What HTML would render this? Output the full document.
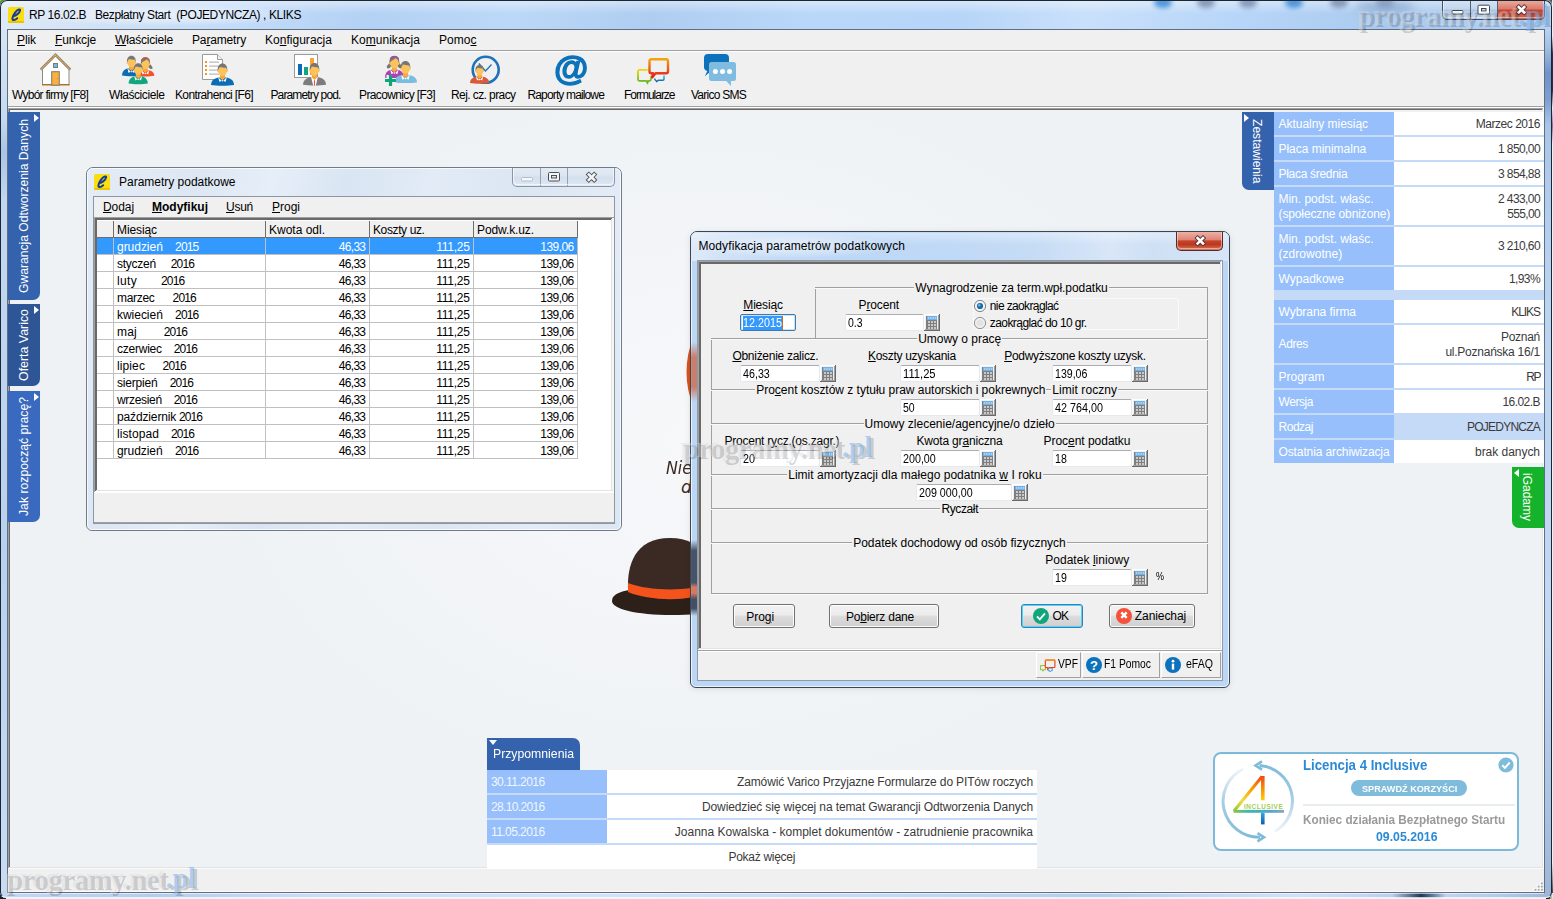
<!DOCTYPE html>
<html lang="pl"><head><meta charset="utf-8"><title>RP 16.02.B Bezpłatny Start</title>
<style>
html,body{margin:0;padding:0;}
body{width:1553px;height:899px;overflow:hidden;position:relative;background:#1b2a22;font-family:"Liberation Sans",sans-serif;font-size:12px;}
div,span.t,svg{position:absolute;}
span.t{white-space:pre;}
u{text-decoration:underline;text-underline-offset:1px;}
</style></head>
<body>
<div style="left:0px;top:0px;width:12px;height:12px;background:linear-gradient(135deg,#dfe8dc 0%,#4f9a2b 9%,#3a7d22 30%,#2f6a1c 60%,#1f3a2a 100%);"></div>
<div style="left:1541px;top:0px;width:12px;height:12px;background:linear-gradient(225deg,#10151c 0%,#e9f0fa 35%,#e9f0fa 100%);"></div>
<div style="left:1552px;top:0px;width:1px;height:899px;background:linear-gradient(to bottom,#e9f0fa 0%,#e9f0fa 4%,#232e52 6%,#232e52 10%,#e9f0fa 12%,#8f6aa8 14%,#e9f0fa 16%,#e9f0fa 96%,#1a2230 100%);"></div>
<div style="left:0px;top:898px;width:1553px;height:1px;background:#eef3fa;"></div>
<div style="left:0px;top:893px;width:6px;height:6px;background:#1a2028;"></div>
<div style="left:1546px;top:893px;width:7px;height:6px;background:linear-gradient(to right,#1a2028 0%,#1a2028 45%,#c98a2a 60%,#8fd0f4 80%,#f4f4f4 100%);"></div>
<div style="left:0px;top:0px;width:1552px;height:898px;box-sizing:border-box;background:#b9d5f4;border-radius:7px 7px 6px 6px;overflow:hidden;"><div style="left:0;top:0;width:1552px;height:30px;background:linear-gradient(100deg,#dfeaf7 0%,#cfe0f5 8%,#c2dbf8 16%,#b3d1f4 24%,#bcd8f8 33%,#aecdf0 42%,#b9d7f9 52%,#b7d5f8 62%,#c9e0fa 70%,#b6d5f8 80%,#a9c9ee 90%,#b4d2f4 100%);"></div><div style="left:0;top:0;width:1552px;height:14px;background:linear-gradient(to bottom,rgba(255,255,255,.45),rgba(255,255,255,0));"></div><div style="left:1154px;top:-3px;width:18px;height:11px;background:#3f8fd9;border-radius:50%;filter:blur(2.500px);opacity:.9;"></div><div style="left:1197px;top:-3px;width:18px;height:11px;background:#7f93b5;border-radius:50%;filter:blur(2.500px);opacity:.9;"></div><div style="left:1239px;top:-3px;width:18px;height:11px;background:#7f93b5;border-radius:50%;filter:blur(2.500px);opacity:.9;"></div><div style="left:1285px;top:-3px;width:18px;height:11px;background:#3f8fd9;border-radius:50%;filter:blur(2.500px);opacity:.9;"></div><div style="left:1330px;top:-3px;width:18px;height:11px;background:#8094b4;border-radius:50%;filter:blur(2.500px);opacity:.9;"></div><div style="left:1376px;top:-3px;width:18px;height:11px;background:#8ea0bd;border-radius:50%;filter:blur(2.500px);opacity:.9;"></div><div style="left:1355px;top:2px;width:60px;height:10px;background:#7d9cc6;border-radius:50%;filter:blur(4px);opacity:.7;"></div><div style="left:0;top:30px;width:8px;height:868px;background:linear-gradient(to bottom,#d5e4f5 0%,#c5daf3 10%,#a9c4e8 14%,#c2d8f2 20%,#b7d1f0 60%,#c8dcf4 100%);"></div><div style="left:1544px;top:30px;width:8px;height:868px;background:linear-gradient(to bottom,#b4d2f4 0%,#a3bfe4 2%,#6f93c9 5%,#7d9fd0 8%,#a9c6ea 11%,#b9d4f2 30%,#c2d9f4 70%,#9db7d8 100%);"></div><div style="left:0;top:891px;width:1552px;height:7px;background:linear-gradient(to right,#c2d8f2 0,#b5cdec 150px,#c9def6 320px,#d0e3f9 600px,#c2d9f4 900px,#b4cdec 1100px,#cfe2f8 1300px,#b9d0ee 1392px,#6a7f9f 1408px,#1f3655 1421px,#6a82a6 1434px,#bdd3ef 1446px,#b3cbea 1500px,#9db5d6 1552px);"></div><div style="left:0;top:0;width:1552px;height:898px;box-sizing:border-box;border:1px solid rgba(255,255,255,.6);border-radius:6px;"></div></div>
<div style="left:0px;top:0px;width:1552px;height:898px;box-sizing:border-box;border:1px solid #1c2530;border-bottom-color:rgba(255,255,255,.35);border-radius:7px 7px 6px 6px;"></div>
<div style="left:7px;top:29px;width:1538px;height:864px;box-sizing:border-box;border:1px solid #5f6e80;background:#f0f0f0;"></div>
<div style="left:8px;top:893px;width:1536px;height:1px;background:rgba(255,255,255,.6);"></div>
<svg style="left:8px;top:7px" width="16" height="16" viewBox="0 0 16 16"><rect x="0" y="0" width="16" height="16" rx="1.5" fill="#fbdd10"/><rect x="0" y="14" width="16" height="2" rx="1" fill="#e9c400"/><path d="M5 9.200C8 8.700 11.600 6.200 12.100 3.400C12.400 1.900 10.400 2.100 8.600 3.900C6.400 6.100 4.600 9.700 4.400 11.700C4.200 13.500 6.600 13.600 9.200 11.200" fill="none" stroke="#173e94" stroke-width="2" stroke-linecap="round"/></svg>
<div style="left:20px;top:4px;width:290px;height:22px;background:radial-gradient(ellipse 50% 50% at 50% 50%,rgba(255,255,255,.55) 0%,rgba(255,255,255,.35) 55%,rgba(255,255,255,0) 100%);"></div>
<span class="t" style="top:8px;font-size:12px;line-height:14px;color:#000;left:29px;letter-spacing:-0.398px;">RP 16.02.B   Bezpłatny Start  (POJEDYNCZA) , KLIKS</span>
<div style="left:1442px;top:1px;width:103px;height:19px;box-sizing:border-box;border:1px solid #45515f;border-top:none;border-radius:0 0 5px 5px;background:linear-gradient(to bottom,#d4e3f5 0%,#c2d6ee 45%,#aac4e4 50%,#bdd4ee 100%);overflow:hidden;"><div style="left:54px;top:0;width:48px;height:18px;background:linear-gradient(to bottom,#e9a99b 0%,#d9796a 45%,#c5422e 50%,#d46a55 100%);"></div><div style="left:27px;top:0;width:1px;height:19px;background:#55606e;"></div><div style="left:54px;top:0;width:1px;height:19px;background:#55606e;"></div><div style="left:0;top:0;width:101px;height:17px;box-sizing:border-box;border:1px solid rgba(255,255,255,.5);border-top:none;border-radius:0 0 4px 4px;"></div></div>
<svg style="left:1442px;top:0" width="103" height="20" viewBox="0 0 103 20"><rect x="10" y="10.500" width="11" height="3.500" rx="1" fill="#fff" stroke="#3e4855" stroke-width="1"/><rect x="36" y="5.200" width="11.500" height="9" rx="1" fill="#fff" stroke="#3e4855" stroke-width="1"/><rect x="39.500" y="8.500" width="4.500" height="2.500" fill="#c6d8ee" stroke="#3e4855" stroke-width="1"/><path d="M76.8 7.1l5.4 5.4M82.2 7.1l-5.4 5.4" fill="none" stroke="#5a2f33" stroke-width="4.400" stroke-linecap="square"/><path d="M76.8 7.1l5.4 5.4M82.2 7.1l-5.4 5.4" fill="none" stroke="#fff" stroke-width="2.600" stroke-linecap="square"/></svg>
<div style="left:8px;top:30px;width:1536px;height:20px;background:#f0f0f0;"></div>
<span class="t" style="top:33px;font-size:12px;line-height:14px;color:#000;left:17px;letter-spacing:-0.090px;"><u>P</u>lik</span>
<span class="t" style="top:33px;font-size:12px;line-height:14px;color:#000;left:55px;letter-spacing:-0.147px;"><u>F</u>unkcje</span>
<span class="t" style="top:33px;font-size:12px;line-height:14px;color:#000;left:115px;letter-spacing:-0.183px;"><u>W</u>łaściciele</span>
<span class="t" style="top:33px;font-size:12px;line-height:14px;color:#000;left:192px;letter-spacing:-0.153px;">Pa<u>r</u>ametry</span>
<span class="t" style="top:33px;font-size:12px;line-height:14px;color:#000;left:265px;letter-spacing:0.022px;">Ko<u>n</u>figuracja</span>
<span class="t" style="top:33px;font-size:12px;line-height:14px;color:#000;left:351px;letter-spacing:0.026px;">Ko<u>m</u>unikacja</span>
<span class="t" style="top:33px;font-size:12px;line-height:14px;color:#000;left:439px;letter-spacing:0.028px;">Pomo<u>c</u></span>
<div style="left:8px;top:50px;width:1536px;height:1px;background:#a0a0a0;"></div>
<div style="left:8px;top:51px;width:1536px;height:1px;background:#fff;"></div>
<div style="left:8px;top:52px;width:1536px;height:55px;background:#f0f0f0;"></div>
<div style="left:8px;top:106px;width:1536px;height:1px;background:#a0a0a0;"></div>
<div style="left:8px;top:107px;width:1536px;height:1px;background:#fff;"></div>
<span class="t" style="top:88px;font-size:12px;line-height:14px;color:#000;left:12px;letter-spacing:-0.744px;">Wybór firmy [F8]</span>
<span class="t" style="top:88px;font-size:12px;line-height:14px;color:#000;left:109px;letter-spacing:-0.411px;">Właściciele</span>
<span class="t" style="top:88px;font-size:12px;line-height:14px;color:#000;left:175px;letter-spacing:-0.629px;">Kontrahenci [F6]</span>
<span class="t" style="top:88px;font-size:12px;line-height:14px;color:#000;left:270.4px;letter-spacing:-0.846px;">Parametry pod.</span>
<span class="t" style="top:88px;font-size:12px;line-height:14px;color:#000;left:359px;letter-spacing:-0.624px;">Pracownicy [F3]</span>
<span class="t" style="top:88px;font-size:12px;line-height:14px;color:#000;left:451px;letter-spacing:-0.585px;">Rej. cz. pracy</span>
<span class="t" style="top:88px;font-size:12px;line-height:14px;color:#000;left:527.5px;letter-spacing:-0.858px;">Raporty mailowe</span>
<span class="t" style="top:88px;font-size:12px;line-height:14px;color:#000;left:624px;letter-spacing:-1.019px;">Formularze</span>
<span class="t" style="top:88px;font-size:12px;line-height:14px;color:#000;left:691px;letter-spacing:-0.747px;">Varico SMS</span>
<div style="left:8px;top:108px;width:1536px;height:784px;background:#f0f0f0;"></div>
<div style="left:8px;top:108px;width:1535px;height:1px;background:#a0a0a0;"></div>
<div style="left:8px;top:109px;width:1534px;height:1px;background:#696969;"></div>
<div style="left:8px;top:108px;width:1px;height:760px;background:#a0a0a0;"></div>
<div style="left:9px;top:109px;width:1px;height:759px;background:#696969;"></div>
<div style="left:10px;top:110px;width:1532px;height:757px;background:radial-gradient(ellipse 520px 380px at 690px 330px,#f7f8fa 0%,#f3f5f8 45%,#eef2f5 100%);"></div>
<div style="left:1542px;top:109px;width:1px;height:759px;background:#e3e3e3;"></div>
<div style="left:1543px;top:108px;width:1px;height:760px;background:#fff;"></div>
<div style="left:9px;top:867px;width:1534px;height:1px;background:#e3e3e3;"></div>
<div style="left:8px;top:868px;width:1536px;height:1px;background:#fafafa;"></div>
<div style="left:8px;top:869px;width:1536px;height:23px;background:#f0f0f0;"></div>
<div style="left:8px;top:891px;width:1536px;height:1px;background:#fbfbfb;"></div>
<svg style="left:1532px;top:880px" width="12" height="12" viewBox="0 0 12 12"><rect x="8" y="1.5" width="1.500" height="1.500" fill="#fff"/><rect x="9" y="2.5" width="1.700" height="1.700" fill="#a3a3a3"/><rect x="4.8" y="4.7" width="1.500" height="1.500" fill="#fff"/><rect x="5.8" y="5.7" width="1.700" height="1.700" fill="#a3a3a3"/><rect x="8" y="4.7" width="1.500" height="1.500" fill="#fff"/><rect x="9" y="5.7" width="1.700" height="1.700" fill="#a3a3a3"/><rect x="1.6" y="7.9" width="1.500" height="1.500" fill="#fff"/><rect x="2.6" y="8.9" width="1.700" height="1.700" fill="#a3a3a3"/><rect x="4.8" y="7.9" width="1.500" height="1.500" fill="#fff"/><rect x="5.8" y="8.9" width="1.700" height="1.700" fill="#a3a3a3"/><rect x="8" y="7.9" width="1.500" height="1.500" fill="#fff"/><rect x="9" y="8.9" width="1.700" height="1.700" fill="#a3a3a3"/></svg>
<div style="left:8px;top:112px;width:32px;height:188px;background:#3462ac;border-radius:0 0 7px 0;"></div>
<svg style="left:34px;top:114px" width="5" height="8" viewBox="0 0 5 8"><path d="M0 0L5 4L0 8z" fill="#fff"/></svg>
<span class="t" style="left:16.4px;top:293px;font-size:13px;line-height:15px;color:#fff;transform:rotate(-90deg) scaleX(0.9334);transform-origin:0 0;">Gwarancja Odtworzenia Danych</span>
<div style="left:8px;top:304px;width:32px;height:82px;background:#2e5596;border-radius:0 0 7px 0;"></div>
<svg style="left:34px;top:306px" width="5" height="8" viewBox="0 0 5 8"><path d="M0 0L5 4L0 8z" fill="#fff"/></svg>
<span class="t" style="left:16.4px;top:381px;font-size:13px;line-height:15px;color:#fff;transform:rotate(-90deg) scaleX(0.9521);transform-origin:0 0;">Oferta Varico</span>
<div style="left:8px;top:391px;width:32px;height:131px;background:#3a6abf;border-radius:0 0 7px 0;"></div>
<svg style="left:34px;top:393px" width="5" height="8" viewBox="0 0 5 8"><path d="M0 0L5 4L0 8z" fill="#fff"/></svg>
<span class="t" style="left:16.4px;top:516px;font-size:13px;line-height:15px;color:#fff;transform:rotate(-90deg) scaleX(0.9411);transform-origin:0 0;">Jak rozpocząć pracę?</span>
<div style="left:1242px;top:112px;width:32px;height:78px;background:#3462ac;border-radius:0 0 0 7px;"></div>
<svg style="left:1244px;top:114px" width="5" height="8" viewBox="0 0 5 8"><path d="M0 0L5 4L0 8z" fill="#fff"/></svg>
<span class="t" style="left:1264.7px;top:118.5px;font-size:13px;line-height:15px;color:#fff;transform:rotate(90deg) scaleX(0.9297);transform-origin:0 0;">Zestawienia</span>
<div style="left:1274px;top:112px;width:270px;height:351px;background:#c5daf7;"></div>
<div style="left:1274px;top:112px;width:120px;height:23px;background:#96bffb;"></div>
<div style="left:1394px;top:112px;width:150px;height:23px;background:#fff;"></div>
<span class="t" style="top:117px;font-size:12px;line-height:14px;color:#fff;left:1278.5px;letter-spacing:-0.034px;">Aktualny miesiąc</span>
<span class="t" style="top:117px;font-size:12px;line-height:14px;color:#3a3a3a;right:13px;letter-spacing:-0.461px;">Marzec 2016</span>
<div style="left:1274px;top:137px;width:120px;height:23px;background:#96bffb;"></div>
<div style="left:1394px;top:137px;width:150px;height:23px;background:#fff;"></div>
<span class="t" style="top:142px;font-size:12px;line-height:14px;color:#fff;left:1278.5px;letter-spacing:-0.023px;">Płaca minimalna</span>
<span class="t" style="top:142px;font-size:12px;line-height:14px;color:#3a3a3a;right:13px;letter-spacing:-0.590px;">1 850,00</span>
<div style="left:1274px;top:162px;width:120px;height:23px;background:#96bffb;"></div>
<div style="left:1394px;top:162px;width:150px;height:23px;background:#fff;"></div>
<span class="t" style="top:167px;font-size:12px;line-height:14px;color:#fff;left:1278.5px;letter-spacing:-0.301px;">Płaca średnia</span>
<span class="t" style="top:167px;font-size:12px;line-height:14px;color:#3a3a3a;right:13px;letter-spacing:-0.590px;">3 854,88</span>
<div style="left:1274px;top:187px;width:120px;height:38px;background:#96bffb;"></div>
<div style="left:1394px;top:187px;width:150px;height:38px;background:#fff;"></div>
<span class="t" style="top:192px;font-size:12px;line-height:14px;color:#fff;left:1278.5px;letter-spacing:-0.021px;">Min. podst. właśc.</span>
<span class="t" style="top:207px;font-size:12px;line-height:14px;color:#fff;left:1278.5px;letter-spacing:-0.119px;">(społeczne obniżone)</span>
<span class="t" style="top:192px;font-size:12px;line-height:14px;color:#3a3a3a;right:13px;letter-spacing:-0.590px;">2 433,00</span>
<span class="t" style="top:207px;font-size:12px;line-height:14px;color:#3a3a3a;right:13px;letter-spacing:-0.667px;">555,00</span>
<div style="left:1274px;top:227px;width:120px;height:38px;background:#96bffb;"></div>
<div style="left:1394px;top:227px;width:150px;height:38px;background:#fff;"></div>
<span class="t" style="top:232px;font-size:12px;line-height:14px;color:#fff;left:1278.5px;letter-spacing:-0.021px;">Min. podst. właśc.</span>
<span class="t" style="top:247px;font-size:12px;line-height:14px;color:#fff;left:1278.5px;letter-spacing:0.031px;">(zdrowotne)</span>
<span class="t" style="top:239px;font-size:12px;line-height:14px;color:#3a3a3a;right:13px;letter-spacing:-0.590px;">3 210,60</span>
<div style="left:1274px;top:267px;width:120px;height:23px;background:#96bffb;"></div>
<div style="left:1394px;top:267px;width:150px;height:23px;background:#fff;"></div>
<span class="t" style="top:272px;font-size:12px;line-height:14px;color:#fff;left:1278.5px;letter-spacing:0.026px;">Wypadkowe</span>
<span class="t" style="top:272px;font-size:12px;line-height:14px;color:#3a3a3a;right:13px;letter-spacing:-0.606px;">1,93%</span>
<div style="left:1274px;top:300px;width:120px;height:23px;background:#96bffb;"></div>
<div style="left:1394px;top:300px;width:150px;height:23px;background:#fff;"></div>
<span class="t" style="top:305px;font-size:12px;line-height:14px;color:#fff;left:1278.5px;letter-spacing:-0.032px;">Wybrana firma</span>
<span class="t" style="top:305px;font-size:12px;line-height:14px;color:#3a3a3a;right:13px;letter-spacing:-1.066px;">KLIKS</span>
<div style="left:1274px;top:325px;width:120px;height:38px;background:#96bffb;"></div>
<div style="left:1394px;top:325px;width:150px;height:38px;background:#fff;"></div>
<span class="t" style="top:337px;font-size:12px;line-height:14px;color:#fff;left:1278.5px;letter-spacing:-0.372px;">Adres</span>
<span class="t" style="top:330px;font-size:12px;line-height:14px;color:#3a3a3a;right:13px;letter-spacing:-0.284px;">Poznań</span>
<span class="t" style="top:345px;font-size:12px;line-height:14px;color:#3a3a3a;right:13px;letter-spacing:-0.244px;">ul.Poznańska 16/1</span>
<div style="left:1274px;top:365px;width:120px;height:23px;background:#96bffb;"></div>
<div style="left:1394px;top:365px;width:150px;height:23px;background:#fff;"></div>
<span class="t" style="top:370px;font-size:12px;line-height:14px;color:#fff;left:1278.5px;">Program</span>
<span class="t" style="top:370px;font-size:12px;line-height:14px;color:#3a3a3a;right:13px;letter-spacing:-1.500px;">RP</span>
<div style="left:1274px;top:390px;width:120px;height:23px;background:#96bffb;"></div>
<div style="left:1394px;top:390px;width:150px;height:23px;background:#fff;"></div>
<span class="t" style="top:395px;font-size:12px;line-height:14px;color:#fff;left:1278.5px;letter-spacing:-0.438px;">Wersja</span>
<span class="t" style="top:395px;font-size:12px;line-height:14px;color:#3a3a3a;right:13px;letter-spacing:-0.539px;">16.02.B</span>
<div style="left:1274px;top:415px;width:120px;height:23px;background:#96bffb;"></div>
<div style="left:1394px;top:415px;width:150px;height:23px;background:#c5daf7;"></div>
<span class="t" style="top:420px;font-size:12px;line-height:14px;color:#fff;left:1278.5px;letter-spacing:-0.477px;">Rodzaj</span>
<span class="t" style="top:420px;font-size:12px;line-height:14px;color:#3a3a3a;right:13px;letter-spacing:-0.769px;">POJEDYNCZA</span>
<div style="left:1274px;top:440px;width:120px;height:23px;background:#96bffb;"></div>
<div style="left:1394px;top:440px;width:150px;height:23px;background:#fff;"></div>
<span class="t" style="top:445px;font-size:12px;line-height:14px;color:#fff;left:1278.5px;letter-spacing:-0.114px;">Ostatnia archiwizacja</span>
<span class="t" style="top:445px;font-size:12px;line-height:14px;color:#3a3a3a;right:13px;letter-spacing:-0.034px;">brak danych</span>
<div style="left:1512px;top:467px;width:32px;height:61px;background:#14b32b;border-radius:0 0 0 7px;"></div>
<svg style="left:1514px;top:469px" width="5" height="8" viewBox="0 0 5 8"><path d="M5 0L0 4L5 8z" fill="#fff"/></svg>
<span class="t" style="left:1534.5px;top:473px;font-size:13px;line-height:15px;color:#fff;transform:rotate(90deg) scaleX(0.9225);transform-origin:0 0;">iGadamy</span>
<div style="left:487px;top:738px;width:93px;height:32px;background:#3462ac;border-radius:0 7px 0 0;"></div>
<svg style="left:489px;top:740px" width="8" height="5" viewBox="0 0 8 5"><path d="M0 0L8 0L4 5z" fill="#fff"/></svg>
<span class="t" style="top:746px;font-size:13px;line-height:15px;color:#fff;left:493px;transform:scaleX(0.9419);transform-origin:0 0;">Przypomnienia</span>
<div style="left:487px;top:770px;width:550px;height:75px;background:#c5daf7;"></div>
<div style="left:487px;top:770px;width:120px;height:23px;background:#96bffb;"></div>
<div style="left:607px;top:770px;width:430px;height:23px;background:#fff;"></div>
<span class="t" style="top:775px;font-size:12px;line-height:14px;color:#f2f6fd;left:491px;letter-spacing:-0.567px;">30.11.2016</span>
<span class="t" style="top:775px;font-size:12px;line-height:14px;color:#3a3a3a;right:520px;letter-spacing:-0.139px;">Zamówić Varico Przyjazne Formularze do PITów roczych</span>
<div style="left:487px;top:795px;width:120px;height:23px;background:#96bffb;"></div>
<div style="left:607px;top:795px;width:430px;height:23px;background:#fff;"></div>
<span class="t" style="top:800px;font-size:12px;line-height:14px;color:#f2f6fd;left:491px;letter-spacing:-0.656px;">28.10.2016</span>
<span class="t" style="top:800px;font-size:12px;line-height:14px;color:#3a3a3a;right:520px;letter-spacing:-0.121px;">Dowiedzieć się więcej na temat Gwarancji Odtworzenia Danych</span>
<div style="left:487px;top:820px;width:120px;height:23px;background:#96bffb;"></div>
<div style="left:607px;top:820px;width:430px;height:23px;background:#fff;"></div>
<span class="t" style="top:825px;font-size:12px;line-height:14px;color:#f2f6fd;left:491px;letter-spacing:-0.567px;">11.05.2016</span>
<span class="t" style="top:825px;font-size:12px;line-height:14px;color:#3a3a3a;right:520px;">Joanna Kowalska - komplet dokumentów - zatrudnienie pracownika</span>
<div style="left:487px;top:845px;width:550px;height:24px;background:#fff;"></div>
<span class="t" style="top:850px;font-size:12px;line-height:14px;color:#3a3a3a;left:728.5px;letter-spacing:-0.294px;">Pokaż więcej</span>
<svg style="left:606px;top:530px" width="140" height="92" viewBox="606 530 140 92"><path d="M612 601 C612 594 622 589.500 640 589.500 L704 589.500 C722 589.500 732 594 732 601 C732 609 708 615 672 615 C636 615 612 609 612 601z" fill="#2d2019"/><path d="M628 590 C627 566 634 538 670 538 C706 538 713 566 712 590 C690 600 650 600 628 590z" fill="#3b2a24"/><path d="M628 583 C650 591.500 690 591.500 712 583 L712 592 C690 601.500 650 601.500 628 592z" fill="#f4541c"/></svg>
<svg style="left:684px;top:330px" width="40" height="84" viewBox="684 330 40 84"><circle cx="777.500" cy="372" r="91" fill="#d9531e"/></svg>
<span class="t" style="top:458px;font-size:17px;line-height:20px;color:#3a2a25;font-family:'DejaVu Sans','Liberation Sans',sans-serif;font-style:italic;left:665.5px;transform:scaleX(0.9317);transform-origin:0 0;">Nie</span>
<span class="t" style="top:476.5px;font-size:17px;line-height:20px;color:#3a2a25;font-family:'DejaVu Sans','Liberation Sans',sans-serif;font-style:italic;left:681px;">d</span>
<div style="left:86px;top:167px;width:536px;height:364px;box-sizing:border-box;border:1px solid #6f7b8a;border-radius:7px 7px 6px 6px;background:linear-gradient(105deg,#e4ecf6 0%,#dde7f3 18%,#e6eef8 30%,#d9e5f3 42%,#e2ebf6 55%,#dbe6f3 70%,#e3ecf6 85%,#dce7f4 100%);box-shadow:0 0 0 1px rgba(255,255,255,.0);"></div>
<div style="left:87px;top:168px;width:534px;height:362px;box-sizing:border-box;border:1px solid rgba(255,255,255,.75);border-radius:6px 6px 5px 5px;"></div>
<svg style="left:94px;top:174px" width="16" height="16" viewBox="0 0 16 16"><rect x="0" y="0" width="16" height="16" rx="1.5" fill="#fbdd10"/><rect x="0" y="14" width="16" height="2" rx="1" fill="#e9c400"/><path d="M5 9.200C8 8.700 11.600 6.200 12.100 3.400C12.400 1.900 10.400 2.100 8.600 3.900C6.400 6.100 4.600 9.700 4.400 11.700C4.200 13.500 6.600 13.600 9.200 11.200" fill="none" stroke="#173e94" stroke-width="2" stroke-linecap="round"/></svg>
<span class="t" style="top:175px;font-size:12px;line-height:14px;color:#000;left:119px;letter-spacing:-0.012px;">Parametry podatkowe</span>
<div style="left:512px;top:168px;width:103px;height:19px;box-sizing:border-box;border:1px solid #8a96a6;border-top:none;border-radius:0 0 5px 5px;background:linear-gradient(to bottom,#e3ebf5 0%,#dbe5f1 45%,#d3dfee 50%,#dfe8f3 100%);overflow:hidden;"><div style="left:27px;top:0;width:1px;height:18px;background:#97a2b0;"></div><div style="left:54px;top:0;width:1px;height:18px;background:#97a2b0;"></div><div style="left:0;top:0;width:101px;height:17px;box-sizing:border-box;border:1px solid rgba(255,255,255,.6);border-top:none;border-radius:0 0 4px 4px;"></div></div>
<svg style="left:512px;top:168px" width="103" height="20" viewBox="0 0 103 20"><rect x="9.500" y="9.500" width="11" height="3.500" rx="1" fill="#f4f7fb" stroke="#b4bdc9" stroke-width="1"/><rect x="36.500" y="4.500" width="11" height="8.500" rx="1" fill="#f4f4f4" stroke="#4a4f57" stroke-width="1"/><rect x="39.500" y="7.500" width="5" height="2.500" fill="#e0e6ee" stroke="#4a4f57" stroke-width="1"/><path d="M76.8 6.5l5.4 5.4M82.2 6.5l-5.4 5.4" fill="none" stroke="#4a4f57" stroke-width="4.400" stroke-linecap="square"/><path d="M76.8 6.5l5.4 5.4M82.2 6.5l-5.4 5.4" fill="none" stroke="#f4f4f4" stroke-width="2.600" stroke-linecap="square"/></svg>
<div style="left:93px;top:196px;width:522px;height:328px;box-sizing:border-box;border:1px solid #8d97a4;background:#f0f0f0;"></div>
<span class="t" style="top:200px;font-size:12px;line-height:14px;color:#000;left:103px;letter-spacing:-0.072px;"><u>D</u>odaj</span>
<span class="t" style="top:200px;font-size:12px;line-height:14px;color:#000;font-weight:bold;left:152px;"><u>M</u>odyfikuj</span>
<span class="t" style="top:200px;font-size:12px;line-height:14px;color:#000;left:226px;letter-spacing:-0.258px;"><u>U</u>suń</span>
<span class="t" style="top:200px;font-size:12px;line-height:14px;color:#000;left:272px;letter-spacing:-0.006px;"><u>P</u>rogi</span>
<div style="left:94px;top:217px;width:520px;height:276px;background:#fff;"></div>
<div style="left:94px;top:217px;width:520px;height:1px;background:#a0a0a0;"></div>
<div style="left:94px;top:218px;width:519px;height:2px;background:#696969;"></div>
<div style="left:94px;top:217px;width:1px;height:275px;background:#a0a0a0;"></div>
<div style="left:95px;top:218px;width:2px;height:274px;background:#696969;"></div>
<div style="left:611px;top:219px;width:1px;height:272px;background:#e3e3e3;"></div>
<div style="left:612px;top:218px;width:2px;height:274px;background:#f6f6f6;"></div>
<div style="left:96px;top:490px;width:517px;height:1px;background:#e3e3e3;"></div>
<div style="left:95px;top:491px;width:519px;height:2px;background:#fff;"></div>
<div style="left:97px;top:220px;width:481px;height:18px;background:#f0f0f0;"></div>
<div style="left:97px;top:237px;width:481px;height:1px;background:#6d6d6d;"></div>
<div style="left:113px;top:220px;width:1px;height:18px;background:#6d6d6d;"></div>
<div style="left:265px;top:220px;width:1px;height:18px;background:#6d6d6d;"></div>
<div style="left:369px;top:220px;width:1px;height:18px;background:#6d6d6d;"></div>
<div style="left:473px;top:220px;width:1px;height:18px;background:#6d6d6d;"></div>
<div style="left:577px;top:220px;width:1px;height:18px;background:#6d6d6d;"></div>
<div style="left:97px;top:220px;width:481px;height:1px;background:#fff;"></div>
<span class="t" style="top:223px;font-size:12px;line-height:14px;color:#000;left:117px;letter-spacing:-0.098px;">Miesiąc</span>
<span class="t" style="top:223px;font-size:12px;line-height:14px;color:#000;left:269px;letter-spacing:-0.005px;">Kwota odl.</span>
<span class="t" style="top:223px;font-size:12px;line-height:14px;color:#000;left:373px;letter-spacing:-0.386px;">Koszty uz.</span>
<span class="t" style="top:223px;font-size:12px;line-height:14px;color:#000;left:477px;letter-spacing:-0.103px;">Podw.k.uz.</span>
<div style="left:97px;top:238px;width:481px;height:16px;background:#3399ff;"></div>
<div style="left:97px;top:254px;width:481px;height:1px;background:#c0c0c0;"></div>
<span class="t" style="top:240px;font-size:12px;line-height:14px;color:#fff;left:117px;letter-spacing:-0.029px;">grudzień</span>
<span class="t" style="top:240px;font-size:12px;line-height:14px;color:#fff;left:175.1px;letter-spacing:-0.851px;">2015</span>
<span class="t" style="top:240px;font-size:12px;line-height:14px;color:#fff;right:1187.7px;letter-spacing:-0.706px;">46,33</span>
<span class="t" style="top:240px;font-size:12px;line-height:14px;color:#fff;right:1083.4px;letter-spacing:-0.270px;">111,25</span>
<span class="t" style="top:240px;font-size:12px;line-height:14px;color:#fff;right:979.3px;letter-spacing:-0.551px;">139,06</span>
<div style="left:97px;top:271px;width:481px;height:1px;background:#c0c0c0;"></div>
<span class="t" style="top:257px;font-size:12px;line-height:14px;color:#000;left:117px;letter-spacing:-0.270px;">styczeń</span>
<span class="t" style="top:257px;font-size:12px;line-height:14px;color:#000;left:170.8px;letter-spacing:-0.851px;">2016</span>
<span class="t" style="top:257px;font-size:12px;line-height:14px;color:#000;right:1187.7px;letter-spacing:-0.706px;">46,33</span>
<span class="t" style="top:257px;font-size:12px;line-height:14px;color:#000;right:1083.4px;letter-spacing:-0.270px;">111,25</span>
<span class="t" style="top:257px;font-size:12px;line-height:14px;color:#000;right:979.3px;letter-spacing:-0.551px;">139,06</span>
<div style="left:97px;top:288px;width:481px;height:1px;background:#c0c0c0;"></div>
<span class="t" style="top:274px;font-size:12px;line-height:14px;color:#000;left:117px;letter-spacing:0.328px;">luty</span>
<span class="t" style="top:274px;font-size:12px;line-height:14px;color:#000;left:161px;letter-spacing:-0.851px;">2016</span>
<span class="t" style="top:274px;font-size:12px;line-height:14px;color:#000;right:1187.7px;letter-spacing:-0.706px;">46,33</span>
<span class="t" style="top:274px;font-size:12px;line-height:14px;color:#000;right:1083.4px;letter-spacing:-0.270px;">111,25</span>
<span class="t" style="top:274px;font-size:12px;line-height:14px;color:#000;right:979.3px;letter-spacing:-0.551px;">139,06</span>
<div style="left:97px;top:305px;width:481px;height:1px;background:#c0c0c0;"></div>
<span class="t" style="top:291px;font-size:12px;line-height:14px;color:#000;left:117px;letter-spacing:-0.307px;">marzec</span>
<span class="t" style="top:291px;font-size:12px;line-height:14px;color:#000;left:172.6px;letter-spacing:-0.851px;">2016</span>
<span class="t" style="top:291px;font-size:12px;line-height:14px;color:#000;right:1187.7px;letter-spacing:-0.706px;">46,33</span>
<span class="t" style="top:291px;font-size:12px;line-height:14px;color:#000;right:1083.4px;letter-spacing:-0.270px;">111,25</span>
<span class="t" style="top:291px;font-size:12px;line-height:14px;color:#000;right:979.3px;letter-spacing:-0.551px;">139,06</span>
<div style="left:97px;top:322px;width:481px;height:1px;background:#c0c0c0;"></div>
<span class="t" style="top:308px;font-size:12px;line-height:14px;color:#000;left:117px;letter-spacing:-0.029px;">kwiecień</span>
<span class="t" style="top:308px;font-size:12px;line-height:14px;color:#000;left:175.1px;letter-spacing:-0.851px;">2016</span>
<span class="t" style="top:308px;font-size:12px;line-height:14px;color:#000;right:1187.7px;letter-spacing:-0.706px;">46,33</span>
<span class="t" style="top:308px;font-size:12px;line-height:14px;color:#000;right:1083.4px;letter-spacing:-0.270px;">111,25</span>
<span class="t" style="top:308px;font-size:12px;line-height:14px;color:#000;right:979.3px;letter-spacing:-0.551px;">139,06</span>
<div style="left:97px;top:339px;width:481px;height:1px;background:#c0c0c0;"></div>
<span class="t" style="top:325px;font-size:12px;line-height:14px;color:#000;left:117px;letter-spacing:0.219px;">maj</span>
<span class="t" style="top:325px;font-size:12px;line-height:14px;color:#000;left:163.8px;letter-spacing:-0.851px;">2016</span>
<span class="t" style="top:325px;font-size:12px;line-height:14px;color:#000;right:1187.7px;letter-spacing:-0.706px;">46,33</span>
<span class="t" style="top:325px;font-size:12px;line-height:14px;color:#000;right:1083.4px;letter-spacing:-0.270px;">111,25</span>
<span class="t" style="top:325px;font-size:12px;line-height:14px;color:#000;right:979.3px;letter-spacing:-0.551px;">139,06</span>
<div style="left:97px;top:356px;width:481px;height:1px;background:#c0c0c0;"></div>
<span class="t" style="top:342px;font-size:12px;line-height:14px;color:#000;left:117px;letter-spacing:-0.236px;">czerwiec</span>
<span class="t" style="top:342px;font-size:12px;line-height:14px;color:#000;left:173.8px;letter-spacing:-0.851px;">2016</span>
<span class="t" style="top:342px;font-size:12px;line-height:14px;color:#000;right:1187.7px;letter-spacing:-0.706px;">46,33</span>
<span class="t" style="top:342px;font-size:12px;line-height:14px;color:#000;right:1083.4px;letter-spacing:-0.270px;">111,25</span>
<span class="t" style="top:342px;font-size:12px;line-height:14px;color:#000;right:979.3px;letter-spacing:-0.551px;">139,06</span>
<div style="left:97px;top:373px;width:481px;height:1px;background:#c0c0c0;"></div>
<span class="t" style="top:359px;font-size:12px;line-height:14px;color:#000;left:117px;letter-spacing:0.107px;">lipiec</span>
<span class="t" style="top:359px;font-size:12px;line-height:14px;color:#000;left:162.6px;letter-spacing:-0.851px;">2016</span>
<span class="t" style="top:359px;font-size:12px;line-height:14px;color:#000;right:1187.7px;letter-spacing:-0.706px;">46,33</span>
<span class="t" style="top:359px;font-size:12px;line-height:14px;color:#000;right:1083.4px;letter-spacing:-0.270px;">111,25</span>
<span class="t" style="top:359px;font-size:12px;line-height:14px;color:#000;right:979.3px;letter-spacing:-0.551px;">139,06</span>
<div style="left:97px;top:390px;width:481px;height:1px;background:#c0c0c0;"></div>
<span class="t" style="top:376px;font-size:12px;line-height:14px;color:#000;left:117px;letter-spacing:-0.191px;">sierpień</span>
<span class="t" style="top:376px;font-size:12px;line-height:14px;color:#000;left:169.8px;letter-spacing:-0.851px;">2016</span>
<span class="t" style="top:376px;font-size:12px;line-height:14px;color:#000;right:1187.7px;letter-spacing:-0.706px;">46,33</span>
<span class="t" style="top:376px;font-size:12px;line-height:14px;color:#000;right:1083.4px;letter-spacing:-0.270px;">111,25</span>
<span class="t" style="top:376px;font-size:12px;line-height:14px;color:#000;right:979.3px;letter-spacing:-0.551px;">139,06</span>
<div style="left:97px;top:407px;width:481px;height:1px;background:#c0c0c0;"></div>
<span class="t" style="top:393px;font-size:12px;line-height:14px;color:#000;left:117px;letter-spacing:-0.320px;">wrzesień</span>
<span class="t" style="top:393px;font-size:12px;line-height:14px;color:#000;left:173.8px;letter-spacing:-0.851px;">2016</span>
<span class="t" style="top:393px;font-size:12px;line-height:14px;color:#000;right:1187.7px;letter-spacing:-0.706px;">46,33</span>
<span class="t" style="top:393px;font-size:12px;line-height:14px;color:#000;right:1083.4px;letter-spacing:-0.270px;">111,25</span>
<span class="t" style="top:393px;font-size:12px;line-height:14px;color:#000;right:979.3px;letter-spacing:-0.551px;">139,06</span>
<div style="left:97px;top:424px;width:481px;height:1px;background:#c0c0c0;"></div>
<span class="t" style="top:410px;font-size:12px;line-height:14px;color:#000;left:117px;letter-spacing:-0.137px;">październik</span>
<span class="t" style="top:410px;font-size:12px;line-height:14px;color:#000;left:178.9px;letter-spacing:-0.851px;">2016</span>
<span class="t" style="top:410px;font-size:12px;line-height:14px;color:#000;right:1187.7px;letter-spacing:-0.706px;">46,33</span>
<span class="t" style="top:410px;font-size:12px;line-height:14px;color:#000;right:1083.4px;letter-spacing:-0.270px;">111,25</span>
<span class="t" style="top:410px;font-size:12px;line-height:14px;color:#000;right:979.3px;letter-spacing:-0.551px;">139,06</span>
<div style="left:97px;top:441px;width:481px;height:1px;background:#c0c0c0;"></div>
<span class="t" style="top:427px;font-size:12px;line-height:14px;color:#000;left:117px;letter-spacing:0.066px;">listopad</span>
<span class="t" style="top:427px;font-size:12px;line-height:14px;color:#000;left:170.9px;letter-spacing:-0.851px;">2016</span>
<span class="t" style="top:427px;font-size:12px;line-height:14px;color:#000;right:1187.7px;letter-spacing:-0.706px;">46,33</span>
<span class="t" style="top:427px;font-size:12px;line-height:14px;color:#000;right:1083.4px;letter-spacing:-0.270px;">111,25</span>
<span class="t" style="top:427px;font-size:12px;line-height:14px;color:#000;right:979.3px;letter-spacing:-0.551px;">139,06</span>
<div style="left:97px;top:458px;width:481px;height:1px;background:#c0c0c0;"></div>
<span class="t" style="top:444px;font-size:12px;line-height:14px;color:#000;left:117px;letter-spacing:-0.066px;">grudzień</span>
<span class="t" style="top:444px;font-size:12px;line-height:14px;color:#000;left:175px;letter-spacing:-0.851px;">2016</span>
<span class="t" style="top:444px;font-size:12px;line-height:14px;color:#000;right:1187.7px;letter-spacing:-0.706px;">46,33</span>
<span class="t" style="top:444px;font-size:12px;line-height:14px;color:#000;right:1083.4px;letter-spacing:-0.270px;">111,25</span>
<span class="t" style="top:444px;font-size:12px;line-height:14px;color:#000;right:979.3px;letter-spacing:-0.551px;">139,06</span>
<div style="left:113px;top:238px;width:1px;height:221px;background:#c0c0c0;"></div>
<div style="left:265px;top:238px;width:1px;height:221px;background:#c0c0c0;"></div>
<div style="left:369px;top:238px;width:1px;height:221px;background:#c0c0c0;"></div>
<div style="left:473px;top:238px;width:1px;height:221px;background:#c0c0c0;"></div>
<div style="left:577px;top:238px;width:1px;height:221px;background:#c0c0c0;"></div>
<div style="left:94px;top:493px;width:520px;height:30px;background:#f0f0f0;"></div>
<div style="left:94px;top:522px;width:520px;height:1px;background:#a0a0a0;"></div>
<div style="left:690px;top:231px;width:540px;height:457px;box-sizing:border-box;border:1px solid #3c4653;border-radius:7px 7px 6px 6px;background:#bcd7f6;box-shadow:0 1px 6px rgba(0,0,0,.10);"></div>
<div style="left:691px;top:232px;width:538px;height:455px;box-sizing:border-box;border:1px solid rgba(255,255,255,.7);border-radius:6px 6px 5px 5px;"></div>
<div style="left:691px;top:232px;width:538px;height:29px;border-radius:6px 6px 0 0;background:linear-gradient(to right,#dfeaf8 0%,#d0e2f7 6%,#c4dbf6 16%,#bdd7f5 30%,#c0d9f6 50%,#c6dcf5 64%,#d8e6f8 78%,#cfe0f5 86%,#d6e5f7 100%);"></div>
<div style="left:692px;top:233px;width:536px;height:12px;background:linear-gradient(to bottom,rgba(255,255,255,.35),rgba(255,255,255,0));border-radius:5px 5px 0 0;"></div>
<div style="left:691px;top:342px;width:6px;height:60px;background:linear-gradient(to bottom,rgba(205,90,50,0),rgba(205,90,50,.7) 25%,rgba(205,90,50,.7) 75%,rgba(205,90,50,0));"></div>
<div style="left:691px;top:540px;width:6px;height:76px;background:linear-gradient(to bottom,rgba(50,60,80,0),rgba(50,60,80,.85) 14%,rgba(50,60,80,.85) 56%,rgba(225,95,60,.8) 62%,rgba(225,95,60,.8) 70%,rgba(45,55,75,.85) 78%,rgba(45,55,75,.85) 90%,rgba(45,55,75,0));"></div>
<div style="left:689px;top:234px;width:210px;height:24px;background:radial-gradient(ellipse 50% 50% at 50% 50%,rgba(255,255,255,.5) 0%,rgba(255,255,255,.3) 55%,rgba(255,255,255,0) 100%);"></div>
<span class="t" style="top:239px;font-size:12px;line-height:14px;color:#000;left:698.5px;letter-spacing:0.090px;">Modyfikacja parametrów podatkowych</span>
<div style="left:1176px;top:232px;width:47px;height:19px;box-sizing:border-box;border:1px solid #5a2a25;border-top:none;border-radius:0 0 5px 5px;background:linear-gradient(to bottom,#eeb1a6 0%,#df8676 42%,#c7422c 50%,#b9391f 70%,#d77b62 100%);overflow:hidden;"><div style="left:0;top:0;width:45px;height:17px;box-sizing:border-box;border:1px solid rgba(255,255,255,.45);border-top:none;border-radius:0 0 4px 4px;"></div></div>
<svg style="left:1176px;top:232px" width="47" height="20" viewBox="0 0 47 20"><path d="M21.6 6.1l5.4 5.4M27 6.1l-5.4 5.4" fill="none" stroke="#5a2f33" stroke-width="4.400" stroke-linecap="square"/><path d="M21.6 6.1l5.4 5.4M27 6.1l-5.4 5.4" fill="none" stroke="#fff" stroke-width="2.600" stroke-linecap="square"/></svg>
<div style="left:697px;top:260px;width:526px;height:421px;background:#f0f0f0;"></div>
<div style="left:697px;top:260px;width:526px;height:1px;background:#8f9aa8;"></div>
<div style="left:697px;top:260px;width:1px;height:421px;background:#8f9aa8;"></div>
<div style="left:1222px;top:260px;width:1px;height:421px;background:#8f9aa8;"></div>
<div style="left:697px;top:680px;width:526px;height:1px;background:#8f9aa8;"></div>
<div style="left:698px;top:261px;width:523px;height:1px;background:#a0a0a0;"></div>
<div style="left:698px;top:262px;width:522px;height:2px;background:#696969;"></div>
<div style="left:698px;top:261px;width:1px;height:388px;background:#a0a0a0;"></div>
<div style="left:699px;top:262px;width:2px;height:387px;background:#696969;"></div>
<div style="left:1220px;top:263px;width:1px;height:386px;background:#e3e3e3;"></div>
<div style="left:1221px;top:262px;width:1px;height:388px;background:#fff;"></div>
<div style="left:699px;top:648px;width:522px;height:1px;background:#e3e3e3;"></div>
<div style="left:698px;top:649px;width:524px;height:1px;background:#fff;"></div>
<div style="left:698px;top:650px;width:524px;height:1px;background:#a0a0a0;"></div>
<div style="left:698px;top:651px;width:524px;height:1px;background:#fff;"></div>
<div style="left:815px;top:287px;width:1px;height:51px;background:#a0a0a0;"></div>
<div style="left:815px;top:287px;width:393px;height:1px;background:#a0a0a0;"></div>
<div style="left:815px;top:288px;width:393px;height:1px;background:#fafafa;"></div>
<div style="left:711px;top:338px;width:1px;height:256px;background:#a0a0a0;"></div>
<div style="left:1207px;top:287px;width:1px;height:307px;background:#a0a0a0;"></div>
<div style="left:711px;top:338px;width:497px;height:1px;background:#a0a0a0;"></div>
<div style="left:711px;top:339px;width:497px;height:1px;background:#fafafa;"></div>
<div style="left:711px;top:389px;width:497px;height:1px;background:#a0a0a0;"></div>
<div style="left:711px;top:390px;width:497px;height:1px;background:#fafafa;"></div>
<div style="left:711px;top:423px;width:497px;height:1px;background:#a0a0a0;"></div>
<div style="left:711px;top:424px;width:497px;height:1px;background:#fafafa;"></div>
<div style="left:711px;top:474px;width:497px;height:1px;background:#a0a0a0;"></div>
<div style="left:711px;top:475px;width:497px;height:1px;background:#fafafa;"></div>
<div style="left:711px;top:508px;width:497px;height:1px;background:#a0a0a0;"></div>
<div style="left:711px;top:509px;width:497px;height:1px;background:#fafafa;"></div>
<div style="left:711px;top:542px;width:497px;height:1px;background:#a0a0a0;"></div>
<div style="left:711px;top:543px;width:497px;height:1px;background:#fafafa;"></div>
<div style="left:711px;top:593px;width:497px;height:1px;background:#a0a0a0;"></div>
<div style="left:711px;top:594px;width:497px;height:1px;background:#fafafa;"></div>
<div style="left:914.3px;top:281px;width:194.4px;height:15px;background:#f0f0f0;"></div>
<span class="t" style="top:281px;font-size:12px;line-height:14px;color:#000;left:915.3px;letter-spacing:-0.048px;">Wynagrodzenie za term.wpł.podatku</span>
<div style="left:917.2px;top:332px;width:85px;height:15px;background:#f0f0f0;"></div>
<span class="t" style="top:332px;font-size:12px;line-height:14px;color:#000;left:918.2px;letter-spacing:-0.029px;">Umowy o pracę</span>
<div style="left:755.2px;top:383px;width:291.3px;height:15px;background:#f0f0f0;"></div>
<span class="t" style="top:383px;font-size:12px;line-height:14px;color:#000;left:756.2px;letter-spacing:-0.016px;">Pro<u>c</u>ent kosztów z tytułu praw autorskich i pokrewnych</span>
<div style="left:1051.2px;top:383px;width:67px;height:15px;background:#f0f0f0;"></div>
<span class="t" style="top:383px;font-size:12px;line-height:14px;color:#000;left:1052.2px;letter-spacing:0.082px;">Limit roczny</span>
<div style="left:863.5px;top:417px;width:192px;height:15px;background:#f0f0f0;"></div>
<span class="t" style="top:417px;font-size:12px;line-height:14px;color:#000;left:864.5px;">Umowy zlecenie/agencyjne/o dzieło</span>
<div style="left:787.2px;top:468px;width:255.4px;height:15px;background:#f0f0f0;"></div>
<span class="t" style="top:468px;font-size:12px;line-height:14px;color:#000;left:788.2px;letter-spacing:0.027px;">Limit amortyzacji dla małego podatnika <u>w</u> I roku</span>
<div style="left:940.4px;top:502px;width:38.7px;height:15px;background:#f0f0f0;"></div>
<span class="t" style="top:502px;font-size:12px;line-height:14px;color:#000;left:941.4px;letter-spacing:-0.378px;">Ryczałt</span>
<div style="left:852.2px;top:536px;width:214.5px;height:15px;background:#f0f0f0;"></div>
<span class="t" style="top:536px;font-size:12px;line-height:14px;color:#000;left:853.2px;letter-spacing:-0.008px;">Podatek dochodowy od osób fizycznych</span>
<span class="t" style="top:298px;font-size:12px;line-height:14px;color:#000;left:743.3px;letter-spacing:-0.170px;"><u>M</u>iesiąc</span>
<div style="left:740px;top:314px;width:56px;height:17px;box-sizing:border-box;border:1px solid #3d7bad;border-radius:2px;background:#fff;box-shadow:inset 0 0 0 1px #c9e2f5;"></div>
<div style="left:742.5px;top:316px;width:39px;height:14px;background:#3399ff;"></div>
<span class="t" style="top:316px;font-size:12px;line-height:14px;color:#fff;left:743px;transform:scaleX(0.8988);transform-origin:0 0;">12.2015</span>
<div style="left:781.5px;top:316px;width:1px;height:14px;background:#c86a1c;"></div>
<span class="t" style="top:298px;font-size:12px;line-height:14px;color:#000;left:858.5px;letter-spacing:-0.125px;">P<u>r</u>ocent</span>
<div style="left:845px;top:314px;width:79px;height:17px;box-sizing:border-box;border:1px solid #e3e9ef;border-top-color:#abadb3;border-radius:2px;background:#fff;"></div>
<span class="t" style="top:316px;font-size:12px;line-height:14px;color:#000;left:848px;transform:scaleX(0.8749);transform-origin:0 0;">0.3</span>
<svg style="left:924px;top:314px" width="16" height="17" viewBox="0 0 16 17"><rect x="0" y="0" width="16" height="17" fill="#f0f0f0"/><rect x="0" y="0" width="15" height="1" fill="#fff"/><rect x="0" y="0" width="1" height="16" fill="#fff"/><rect x="15" y="0" width="1" height="17" fill="#696969"/><rect x="0" y="16" width="16" height="1" fill="#696969"/><rect x="14" y="1" width="1" height="15" fill="#a0a0a0"/><rect x="1" y="15" width="14" height="1" fill="#a0a0a0"/><rect x="2" y="2" width="11" height="13" fill="#7f7f7f"/><rect x="3" y="2" width="10" height="4" fill="#6fb1e8"/><rect x="4" y="3.5" width="1.4" height="1" fill="#e8f3fc"/><rect x="6.3" y="3.5" width="1.4" height="1" fill="#e8f3fc"/><rect x="8.6" y="3.5" width="1.4" height="1" fill="#e8f3fc"/><rect x="10.9" y="3.5" width="1.4" height="1" fill="#e8f3fc"/><rect x="4" y="7" width="2" height="2" fill="#c9c9c9"/><rect x="7" y="7" width="2" height="2" fill="#c9c9c9"/><rect x="10" y="7" width="2" height="2" fill="#c9c9c9"/><rect x="4" y="10" width="2" height="2" fill="#c9c9c9"/><rect x="7" y="10" width="2" height="2" fill="#c9c9c9"/><rect x="10" y="10" width="2" height="2" fill="#c9c9c9"/><rect x="4" y="13" width="2" height="2" fill="#c9c9c9"/><rect x="7" y="13" width="2" height="2" fill="#c9c9c9"/><rect x="10" y="13" width="2" height="2" fill="#c9c9c9"/></svg>
<div style="left:973px;top:298px;width:206px;height:32px;box-sizing:border-box;border:1px solid #fafafa;border-radius:3px;"></div>
<svg style="left:973px;top:299px" width="14" height="32" viewBox="0 0 14 32"><circle cx="7" cy="7" r="5.6" fill="#f4f4f4" stroke="#7e8489" stroke-width="1"/><circle cx="7" cy="7" r="3.1" fill="#1c6aa6"/><circle cx="6.2" cy="6.2" r="1.3" fill="#5fb4e8"/><circle cx="7" cy="24" r="5.6" fill="#f1f1f1" stroke="#8e9398" stroke-width="1"/><circle cx="7" cy="24" r="3.6" fill="#e3e3e3"/></svg>
<span class="t" style="top:299px;font-size:12px;line-height:14px;color:#000;left:989.8px;letter-spacing:-0.628px;">nie zaokrąglać</span>
<span class="t" style="top:316px;font-size:12px;line-height:14px;color:#000;left:989.8px;letter-spacing:-0.569px;">zaokrąglać do 10 gr.</span>
<span class="t" style="top:349px;font-size:12px;line-height:14px;color:#000;left:732.4px;letter-spacing:-0.278px;"><u>O</u>bniżenie zalicz.</span>
<div style="left:740px;top:365px;width:80px;height:17px;box-sizing:border-box;border:1px solid #e3e9ef;border-top-color:#abadb3;border-radius:2px;background:#fff;"></div>
<span class="t" style="top:367px;font-size:12px;line-height:14px;color:#000;left:743px;transform:scaleX(0.8924);transform-origin:0 0;">46,33</span>
<svg style="left:820px;top:365px" width="16" height="17" viewBox="0 0 16 17"><rect x="0" y="0" width="16" height="17" fill="#f0f0f0"/><rect x="0" y="0" width="15" height="1" fill="#fff"/><rect x="0" y="0" width="1" height="16" fill="#fff"/><rect x="15" y="0" width="1" height="17" fill="#696969"/><rect x="0" y="16" width="16" height="1" fill="#696969"/><rect x="14" y="1" width="1" height="15" fill="#a0a0a0"/><rect x="1" y="15" width="14" height="1" fill="#a0a0a0"/><rect x="2" y="2" width="11" height="13" fill="#7f7f7f"/><rect x="3" y="2" width="10" height="4" fill="#6fb1e8"/><rect x="4" y="3.5" width="1.4" height="1" fill="#e8f3fc"/><rect x="6.3" y="3.5" width="1.4" height="1" fill="#e8f3fc"/><rect x="8.6" y="3.5" width="1.4" height="1" fill="#e8f3fc"/><rect x="10.9" y="3.5" width="1.4" height="1" fill="#e8f3fc"/><rect x="4" y="7" width="2" height="2" fill="#c9c9c9"/><rect x="7" y="7" width="2" height="2" fill="#c9c9c9"/><rect x="10" y="7" width="2" height="2" fill="#c9c9c9"/><rect x="4" y="10" width="2" height="2" fill="#c9c9c9"/><rect x="7" y="10" width="2" height="2" fill="#c9c9c9"/><rect x="10" y="10" width="2" height="2" fill="#c9c9c9"/><rect x="4" y="13" width="2" height="2" fill="#c9c9c9"/><rect x="7" y="13" width="2" height="2" fill="#c9c9c9"/><rect x="10" y="13" width="2" height="2" fill="#c9c9c9"/></svg>
<span class="t" style="top:349px;font-size:12px;line-height:14px;color:#000;left:868px;letter-spacing:-0.307px;"><u>K</u>oszty uzyskania</span>
<div style="left:900px;top:365px;width:80px;height:17px;box-sizing:border-box;border:1px solid #e3e9ef;border-top-color:#abadb3;border-radius:2px;background:#fff;"></div>
<span class="t" style="top:367px;font-size:12px;line-height:14px;color:#000;left:903px;transform:scaleX(0.9335);transform-origin:0 0;">111,25</span>
<svg style="left:980px;top:365px" width="16" height="17" viewBox="0 0 16 17"><rect x="0" y="0" width="16" height="17" fill="#f0f0f0"/><rect x="0" y="0" width="15" height="1" fill="#fff"/><rect x="0" y="0" width="1" height="16" fill="#fff"/><rect x="15" y="0" width="1" height="17" fill="#696969"/><rect x="0" y="16" width="16" height="1" fill="#696969"/><rect x="14" y="1" width="1" height="15" fill="#a0a0a0"/><rect x="1" y="15" width="14" height="1" fill="#a0a0a0"/><rect x="2" y="2" width="11" height="13" fill="#7f7f7f"/><rect x="3" y="2" width="10" height="4" fill="#6fb1e8"/><rect x="4" y="3.5" width="1.4" height="1" fill="#e8f3fc"/><rect x="6.3" y="3.5" width="1.4" height="1" fill="#e8f3fc"/><rect x="8.6" y="3.5" width="1.4" height="1" fill="#e8f3fc"/><rect x="10.9" y="3.5" width="1.4" height="1" fill="#e8f3fc"/><rect x="4" y="7" width="2" height="2" fill="#c9c9c9"/><rect x="7" y="7" width="2" height="2" fill="#c9c9c9"/><rect x="10" y="7" width="2" height="2" fill="#c9c9c9"/><rect x="4" y="10" width="2" height="2" fill="#c9c9c9"/><rect x="7" y="10" width="2" height="2" fill="#c9c9c9"/><rect x="10" y="10" width="2" height="2" fill="#c9c9c9"/><rect x="4" y="13" width="2" height="2" fill="#c9c9c9"/><rect x="7" y="13" width="2" height="2" fill="#c9c9c9"/><rect x="10" y="13" width="2" height="2" fill="#c9c9c9"/></svg>
<span class="t" style="top:349px;font-size:12px;line-height:14px;color:#000;left:1004.2px;letter-spacing:-0.289px;"><u>P</u>odwyższone koszty uzysk.</span>
<div style="left:1052px;top:365px;width:80px;height:17px;box-sizing:border-box;border:1px solid #e3e9ef;border-top-color:#abadb3;border-radius:2px;background:#fff;"></div>
<span class="t" style="top:367px;font-size:12px;line-height:14px;color:#000;left:1055px;transform:scaleX(0.8828);transform-origin:0 0;">139,06</span>
<svg style="left:1132px;top:365px" width="16" height="17" viewBox="0 0 16 17"><rect x="0" y="0" width="16" height="17" fill="#f0f0f0"/><rect x="0" y="0" width="15" height="1" fill="#fff"/><rect x="0" y="0" width="1" height="16" fill="#fff"/><rect x="15" y="0" width="1" height="17" fill="#696969"/><rect x="0" y="16" width="16" height="1" fill="#696969"/><rect x="14" y="1" width="1" height="15" fill="#a0a0a0"/><rect x="1" y="15" width="14" height="1" fill="#a0a0a0"/><rect x="2" y="2" width="11" height="13" fill="#7f7f7f"/><rect x="3" y="2" width="10" height="4" fill="#6fb1e8"/><rect x="4" y="3.5" width="1.4" height="1" fill="#e8f3fc"/><rect x="6.3" y="3.5" width="1.4" height="1" fill="#e8f3fc"/><rect x="8.6" y="3.5" width="1.4" height="1" fill="#e8f3fc"/><rect x="10.9" y="3.5" width="1.4" height="1" fill="#e8f3fc"/><rect x="4" y="7" width="2" height="2" fill="#c9c9c9"/><rect x="7" y="7" width="2" height="2" fill="#c9c9c9"/><rect x="10" y="7" width="2" height="2" fill="#c9c9c9"/><rect x="4" y="10" width="2" height="2" fill="#c9c9c9"/><rect x="7" y="10" width="2" height="2" fill="#c9c9c9"/><rect x="10" y="10" width="2" height="2" fill="#c9c9c9"/><rect x="4" y="13" width="2" height="2" fill="#c9c9c9"/><rect x="7" y="13" width="2" height="2" fill="#c9c9c9"/><rect x="10" y="13" width="2" height="2" fill="#c9c9c9"/></svg>
<div style="left:900px;top:399px;width:80px;height:17px;box-sizing:border-box;border:1px solid #e3e9ef;border-top-color:#abadb3;border-radius:2px;background:#fff;"></div>
<span class="t" style="top:401px;font-size:12px;line-height:14px;color:#000;left:903px;transform:scaleX(0.8758);transform-origin:0 0;">50</span>
<svg style="left:980px;top:399px" width="16" height="17" viewBox="0 0 16 17"><rect x="0" y="0" width="16" height="17" fill="#f0f0f0"/><rect x="0" y="0" width="15" height="1" fill="#fff"/><rect x="0" y="0" width="1" height="16" fill="#fff"/><rect x="15" y="0" width="1" height="17" fill="#696969"/><rect x="0" y="16" width="16" height="1" fill="#696969"/><rect x="14" y="1" width="1" height="15" fill="#a0a0a0"/><rect x="1" y="15" width="14" height="1" fill="#a0a0a0"/><rect x="2" y="2" width="11" height="13" fill="#7f7f7f"/><rect x="3" y="2" width="10" height="4" fill="#6fb1e8"/><rect x="4" y="3.5" width="1.4" height="1" fill="#e8f3fc"/><rect x="6.3" y="3.5" width="1.4" height="1" fill="#e8f3fc"/><rect x="8.6" y="3.5" width="1.4" height="1" fill="#e8f3fc"/><rect x="10.9" y="3.5" width="1.4" height="1" fill="#e8f3fc"/><rect x="4" y="7" width="2" height="2" fill="#c9c9c9"/><rect x="7" y="7" width="2" height="2" fill="#c9c9c9"/><rect x="10" y="7" width="2" height="2" fill="#c9c9c9"/><rect x="4" y="10" width="2" height="2" fill="#c9c9c9"/><rect x="7" y="10" width="2" height="2" fill="#c9c9c9"/><rect x="10" y="10" width="2" height="2" fill="#c9c9c9"/><rect x="4" y="13" width="2" height="2" fill="#c9c9c9"/><rect x="7" y="13" width="2" height="2" fill="#c9c9c9"/><rect x="10" y="13" width="2" height="2" fill="#c9c9c9"/></svg>
<div style="left:1052px;top:399px;width:80px;height:17px;box-sizing:border-box;border:1px solid #e3e9ef;border-top-color:#abadb3;border-radius:2px;background:#fff;"></div>
<span class="t" style="top:401px;font-size:12px;line-height:14px;color:#000;left:1055px;transform:scaleX(0.8972);transform-origin:0 0;">42 764,00</span>
<svg style="left:1132px;top:399px" width="16" height="17" viewBox="0 0 16 17"><rect x="0" y="0" width="16" height="17" fill="#f0f0f0"/><rect x="0" y="0" width="15" height="1" fill="#fff"/><rect x="0" y="0" width="1" height="16" fill="#fff"/><rect x="15" y="0" width="1" height="17" fill="#696969"/><rect x="0" y="16" width="16" height="1" fill="#696969"/><rect x="14" y="1" width="1" height="15" fill="#a0a0a0"/><rect x="1" y="15" width="14" height="1" fill="#a0a0a0"/><rect x="2" y="2" width="11" height="13" fill="#7f7f7f"/><rect x="3" y="2" width="10" height="4" fill="#6fb1e8"/><rect x="4" y="3.5" width="1.4" height="1" fill="#e8f3fc"/><rect x="6.3" y="3.5" width="1.4" height="1" fill="#e8f3fc"/><rect x="8.6" y="3.5" width="1.4" height="1" fill="#e8f3fc"/><rect x="10.9" y="3.5" width="1.4" height="1" fill="#e8f3fc"/><rect x="4" y="7" width="2" height="2" fill="#c9c9c9"/><rect x="7" y="7" width="2" height="2" fill="#c9c9c9"/><rect x="10" y="7" width="2" height="2" fill="#c9c9c9"/><rect x="4" y="10" width="2" height="2" fill="#c9c9c9"/><rect x="7" y="10" width="2" height="2" fill="#c9c9c9"/><rect x="10" y="10" width="2" height="2" fill="#c9c9c9"/><rect x="4" y="13" width="2" height="2" fill="#c9c9c9"/><rect x="7" y="13" width="2" height="2" fill="#c9c9c9"/><rect x="10" y="13" width="2" height="2" fill="#c9c9c9"/></svg>
<span class="t" style="top:434px;font-size:12px;line-height:14px;color:#000;left:724.4px;letter-spacing:-0.219px;">Procent r<u>y</u>cz.(os.zagr.)</span>
<div style="left:740px;top:450px;width:80px;height:17px;box-sizing:border-box;border:1px solid #e3e9ef;border-top-color:#abadb3;border-radius:2px;background:#fff;"></div>
<span class="t" style="top:452px;font-size:12px;line-height:14px;color:#000;left:743px;transform:scaleX(0.8982);transform-origin:0 0;">20</span>
<svg style="left:820px;top:450px" width="16" height="17" viewBox="0 0 16 17"><rect x="0" y="0" width="16" height="17" fill="#f0f0f0"/><rect x="0" y="0" width="15" height="1" fill="#fff"/><rect x="0" y="0" width="1" height="16" fill="#fff"/><rect x="15" y="0" width="1" height="17" fill="#696969"/><rect x="0" y="16" width="16" height="1" fill="#696969"/><rect x="14" y="1" width="1" height="15" fill="#a0a0a0"/><rect x="1" y="15" width="14" height="1" fill="#a0a0a0"/><rect x="2" y="2" width="11" height="13" fill="#7f7f7f"/><rect x="3" y="2" width="10" height="4" fill="#6fb1e8"/><rect x="4" y="3.5" width="1.4" height="1" fill="#e8f3fc"/><rect x="6.3" y="3.5" width="1.4" height="1" fill="#e8f3fc"/><rect x="8.6" y="3.5" width="1.4" height="1" fill="#e8f3fc"/><rect x="10.9" y="3.5" width="1.4" height="1" fill="#e8f3fc"/><rect x="4" y="7" width="2" height="2" fill="#c9c9c9"/><rect x="7" y="7" width="2" height="2" fill="#c9c9c9"/><rect x="10" y="7" width="2" height="2" fill="#c9c9c9"/><rect x="4" y="10" width="2" height="2" fill="#c9c9c9"/><rect x="7" y="10" width="2" height="2" fill="#c9c9c9"/><rect x="10" y="10" width="2" height="2" fill="#c9c9c9"/><rect x="4" y="13" width="2" height="2" fill="#c9c9c9"/><rect x="7" y="13" width="2" height="2" fill="#c9c9c9"/><rect x="10" y="13" width="2" height="2" fill="#c9c9c9"/></svg>
<span class="t" style="top:434px;font-size:12px;line-height:14px;color:#000;left:916.5px;letter-spacing:-0.182px;">Kwota gr<u>a</u>niczna</span>
<div style="left:900px;top:450px;width:80px;height:17px;box-sizing:border-box;border:1px solid #e3e9ef;border-top-color:#abadb3;border-radius:2px;background:#fff;"></div>
<span class="t" style="top:452px;font-size:12px;line-height:14px;color:#000;left:903px;transform:scaleX(0.8937);transform-origin:0 0;">200,00</span>
<svg style="left:980px;top:450px" width="16" height="17" viewBox="0 0 16 17"><rect x="0" y="0" width="16" height="17" fill="#f0f0f0"/><rect x="0" y="0" width="15" height="1" fill="#fff"/><rect x="0" y="0" width="1" height="16" fill="#fff"/><rect x="15" y="0" width="1" height="17" fill="#696969"/><rect x="0" y="16" width="16" height="1" fill="#696969"/><rect x="14" y="1" width="1" height="15" fill="#a0a0a0"/><rect x="1" y="15" width="14" height="1" fill="#a0a0a0"/><rect x="2" y="2" width="11" height="13" fill="#7f7f7f"/><rect x="3" y="2" width="10" height="4" fill="#6fb1e8"/><rect x="4" y="3.5" width="1.4" height="1" fill="#e8f3fc"/><rect x="6.3" y="3.5" width="1.4" height="1" fill="#e8f3fc"/><rect x="8.6" y="3.5" width="1.4" height="1" fill="#e8f3fc"/><rect x="10.9" y="3.5" width="1.4" height="1" fill="#e8f3fc"/><rect x="4" y="7" width="2" height="2" fill="#c9c9c9"/><rect x="7" y="7" width="2" height="2" fill="#c9c9c9"/><rect x="10" y="7" width="2" height="2" fill="#c9c9c9"/><rect x="4" y="10" width="2" height="2" fill="#c9c9c9"/><rect x="7" y="10" width="2" height="2" fill="#c9c9c9"/><rect x="10" y="10" width="2" height="2" fill="#c9c9c9"/><rect x="4" y="13" width="2" height="2" fill="#c9c9c9"/><rect x="7" y="13" width="2" height="2" fill="#c9c9c9"/><rect x="10" y="13" width="2" height="2" fill="#c9c9c9"/></svg>
<span class="t" style="top:434px;font-size:12px;line-height:14px;color:#000;left:1043.5px;letter-spacing:-0.028px;">Proc<u>e</u>nt podatku</span>
<div style="left:1052px;top:450px;width:80px;height:17px;box-sizing:border-box;border:1px solid #e3e9ef;border-top-color:#abadb3;border-radius:2px;background:#fff;"></div>
<span class="t" style="top:452px;font-size:12px;line-height:14px;color:#000;left:1055px;transform:scaleX(0.8833);transform-origin:0 0;">18</span>
<svg style="left:1132px;top:450px" width="16" height="17" viewBox="0 0 16 17"><rect x="0" y="0" width="16" height="17" fill="#f0f0f0"/><rect x="0" y="0" width="15" height="1" fill="#fff"/><rect x="0" y="0" width="1" height="16" fill="#fff"/><rect x="15" y="0" width="1" height="17" fill="#696969"/><rect x="0" y="16" width="16" height="1" fill="#696969"/><rect x="14" y="1" width="1" height="15" fill="#a0a0a0"/><rect x="1" y="15" width="14" height="1" fill="#a0a0a0"/><rect x="2" y="2" width="11" height="13" fill="#7f7f7f"/><rect x="3" y="2" width="10" height="4" fill="#6fb1e8"/><rect x="4" y="3.5" width="1.4" height="1" fill="#e8f3fc"/><rect x="6.3" y="3.5" width="1.4" height="1" fill="#e8f3fc"/><rect x="8.6" y="3.5" width="1.4" height="1" fill="#e8f3fc"/><rect x="10.9" y="3.5" width="1.4" height="1" fill="#e8f3fc"/><rect x="4" y="7" width="2" height="2" fill="#c9c9c9"/><rect x="7" y="7" width="2" height="2" fill="#c9c9c9"/><rect x="10" y="7" width="2" height="2" fill="#c9c9c9"/><rect x="4" y="10" width="2" height="2" fill="#c9c9c9"/><rect x="7" y="10" width="2" height="2" fill="#c9c9c9"/><rect x="10" y="10" width="2" height="2" fill="#c9c9c9"/><rect x="4" y="13" width="2" height="2" fill="#c9c9c9"/><rect x="7" y="13" width="2" height="2" fill="#c9c9c9"/><rect x="10" y="13" width="2" height="2" fill="#c9c9c9"/></svg>
<div style="left:916px;top:484px;width:96px;height:17px;box-sizing:border-box;border:1px solid #e3e9ef;border-top-color:#abadb3;border-radius:2px;background:#fff;"></div>
<span class="t" style="top:486px;font-size:12px;line-height:14px;color:#000;left:919px;transform:scaleX(0.8924);transform-origin:0 0;">209 000,00</span>
<svg style="left:1012px;top:484px" width="16" height="17" viewBox="0 0 16 17"><rect x="0" y="0" width="16" height="17" fill="#f0f0f0"/><rect x="0" y="0" width="15" height="1" fill="#fff"/><rect x="0" y="0" width="1" height="16" fill="#fff"/><rect x="15" y="0" width="1" height="17" fill="#696969"/><rect x="0" y="16" width="16" height="1" fill="#696969"/><rect x="14" y="1" width="1" height="15" fill="#a0a0a0"/><rect x="1" y="15" width="14" height="1" fill="#a0a0a0"/><rect x="2" y="2" width="11" height="13" fill="#7f7f7f"/><rect x="3" y="2" width="10" height="4" fill="#6fb1e8"/><rect x="4" y="3.5" width="1.4" height="1" fill="#e8f3fc"/><rect x="6.3" y="3.5" width="1.4" height="1" fill="#e8f3fc"/><rect x="8.6" y="3.5" width="1.4" height="1" fill="#e8f3fc"/><rect x="10.9" y="3.5" width="1.4" height="1" fill="#e8f3fc"/><rect x="4" y="7" width="2" height="2" fill="#c9c9c9"/><rect x="7" y="7" width="2" height="2" fill="#c9c9c9"/><rect x="10" y="7" width="2" height="2" fill="#c9c9c9"/><rect x="4" y="10" width="2" height="2" fill="#c9c9c9"/><rect x="7" y="10" width="2" height="2" fill="#c9c9c9"/><rect x="10" y="10" width="2" height="2" fill="#c9c9c9"/><rect x="4" y="13" width="2" height="2" fill="#c9c9c9"/><rect x="7" y="13" width="2" height="2" fill="#c9c9c9"/><rect x="10" y="13" width="2" height="2" fill="#c9c9c9"/></svg>
<span class="t" style="top:553px;font-size:12px;line-height:14px;color:#000;left:1045.2px;letter-spacing:0.040px;">Podatek <u>l</u>iniowy</span>
<div style="left:1052px;top:569px;width:80px;height:17px;box-sizing:border-box;border:1px solid #e3e9ef;border-top-color:#abadb3;border-radius:2px;background:#fff;"></div>
<span class="t" style="top:571px;font-size:12px;line-height:14px;color:#000;left:1055px;transform:scaleX(0.8833);transform-origin:0 0;">19</span>
<svg style="left:1132px;top:569px" width="16" height="17" viewBox="0 0 16 17"><rect x="0" y="0" width="16" height="17" fill="#f0f0f0"/><rect x="0" y="0" width="15" height="1" fill="#fff"/><rect x="0" y="0" width="1" height="16" fill="#fff"/><rect x="15" y="0" width="1" height="17" fill="#696969"/><rect x="0" y="16" width="16" height="1" fill="#696969"/><rect x="14" y="1" width="1" height="15" fill="#a0a0a0"/><rect x="1" y="15" width="14" height="1" fill="#a0a0a0"/><rect x="2" y="2" width="11" height="13" fill="#7f7f7f"/><rect x="3" y="2" width="10" height="4" fill="#6fb1e8"/><rect x="4" y="3.5" width="1.4" height="1" fill="#e8f3fc"/><rect x="6.3" y="3.5" width="1.4" height="1" fill="#e8f3fc"/><rect x="8.6" y="3.5" width="1.4" height="1" fill="#e8f3fc"/><rect x="10.9" y="3.5" width="1.4" height="1" fill="#e8f3fc"/><rect x="4" y="7" width="2" height="2" fill="#c9c9c9"/><rect x="7" y="7" width="2" height="2" fill="#c9c9c9"/><rect x="10" y="7" width="2" height="2" fill="#c9c9c9"/><rect x="4" y="10" width="2" height="2" fill="#c9c9c9"/><rect x="7" y="10" width="2" height="2" fill="#c9c9c9"/><rect x="10" y="10" width="2" height="2" fill="#c9c9c9"/><rect x="4" y="13" width="2" height="2" fill="#c9c9c9"/><rect x="7" y="13" width="2" height="2" fill="#c9c9c9"/><rect x="10" y="13" width="2" height="2" fill="#c9c9c9"/></svg>
<span class="t" style="top:571px;font-size:10px;line-height:11px;color:#000;left:1156.2px;transform:scaleX(0.8982);transform-origin:0 0;">%</span>
<div style="left:733px;top:604px;width:62px;height:24px;box-sizing:border-box;border:1px solid #707070;border-radius:3px;box-shadow:inset 0 0 0 1px rgba(255,255,255,.9);background:linear-gradient(to bottom,#f2f2f2 0%,#ebebeb 46%,#dddddd 50%,#cfcfcf 100%);"></div>
<span class="t" style="top:610px;font-size:12px;line-height:14px;color:#000;left:746.3px;letter-spacing:-0.069px;">Pro<u>g</u>i</span>
<div style="left:829px;top:604px;width:110px;height:24px;box-sizing:border-box;border:1px solid #707070;border-radius:3px;box-shadow:inset 0 0 0 1px rgba(255,255,255,.9);background:linear-gradient(to bottom,#f2f2f2 0%,#ebebeb 46%,#dddddd 50%,#cfcfcf 100%);"></div>
<span class="t" style="top:610px;font-size:12px;line-height:14px;color:#000;left:846px;letter-spacing:-0.229px;">Po<u>b</u>ierz dane</span>
<div style="left:1021px;top:604px;width:62px;height:24px;box-sizing:border-box;border:1px solid #3c7fb1;border-radius:3px;box-shadow:inset 0 0 0 1px #48d6fb;background:linear-gradient(to bottom,#f2f2f2 0%,#ebebeb 46%,#dddddd 50%,#cfcfcf 100%);"></div>
<svg style="left:1033px;top:608px" width="16" height="16" viewBox="0 0 16 16"><circle cx="8" cy="8" r="8" fill="#10a67c"/><path d="M4 8.4l2.8 2.9l5.2-6" fill="none" stroke="#fff" stroke-width="1.8"/></svg>
<span class="t" style="top:609px;font-size:12px;line-height:14px;color:#000;left:1052.6px;letter-spacing:-0.922px;">OK</span>
<div style="left:1109px;top:604px;width:86px;height:24px;box-sizing:border-box;border:1px solid #707070;border-radius:3px;box-shadow:inset 0 0 0 1px rgba(255,255,255,.9);background:linear-gradient(to bottom,#f2f2f2 0%,#ebebeb 46%,#dddddd 50%,#cfcfcf 100%);"></div>
<svg style="left:1116px;top:608px" width="16" height="16" viewBox="0 0 16 16"><circle cx="8" cy="8" r="8" fill="#f4523a"/><path d="M5.3 4.4l5.4 5.4M10.7 4.4l-5.4 5.4" fill="none" stroke="#fff" stroke-width="2.4"/></svg>
<span class="t" style="top:609px;font-size:12px;line-height:14px;color:#000;left:1134.8px;letter-spacing:-0.081px;">Zaniechaj</span>
<div style="left:1036px;top:652px;width:45px;height:26px;box-sizing:border-box;border-left:1px solid #fff;border-top:1px solid #fff;border-right:1px solid #a0a0a0;border-bottom:1px solid #a0a0a0;"></div>
<div style="left:1082px;top:652px;width:78px;height:26px;box-sizing:border-box;border-left:1px solid #fff;border-top:1px solid #fff;border-right:1px solid #a0a0a0;border-bottom:1px solid #a0a0a0;"></div>
<div style="left:1161px;top:652px;width:60px;height:26px;box-sizing:border-box;border-left:1px solid #fff;border-top:1px solid #fff;border-right:1px solid #a0a0a0;border-bottom:1px solid #a0a0a0;"></div>
<svg style="left:1039px;top:658px;transform:scale(0.53);transform-origin:0 0" width="32" height="32" viewBox="0 0 32 32"><path d="M3 14h9v8h-3l-1.5 2.5l-1-2.5h-3.5z" fill="none" stroke="#8bc53f" stroke-width="2" stroke-linejoin="round"/><path d="M17 19h8v5h-2.5l-1.5 2l-.5-2h-3.500z" fill="none" stroke="#2d8fd6" stroke-width="1.6" stroke-linejoin="round"/><path d="M13 4h16a1 1 0 0 1 1 1v12a1 1 0 0 1-1 1h-10l-3 3.500v-3.500h-3a1 1 0 0 1-1-1v-12a1 1 0 0 1 1-1z" fill="#f0f0f0" stroke="#e8431f" stroke-width="2.2" stroke-linejoin="round"/><path d="M12 5.200v-.2a1 1 0 0 1 1-1h16a1 1 0 0 1 1 1v.2" fill="none" stroke="#f39a1d" stroke-width="2.2"/></svg>
<span class="t" style="top:657px;font-size:12px;line-height:14px;color:#000;left:1057.7px;transform:scaleX(0.8568);transform-origin:0 0;">VPF</span>
<svg style="left:1086px;top:657px" width="16" height="16" viewBox="0 0 16 16"><circle cx="8" cy="8" r="8" fill="#0b72bb"/></svg>
<span class="t" style="top:658px;font-size:13px;line-height:15px;color:#fff;font-weight:bold;left:1094px;transform:translateX(-50%);transform-origin:0 0;">?</span>
<span class="t" style="top:657px;font-size:12px;line-height:14px;color:#000;left:1104.4px;transform:scaleX(0.8594);transform-origin:0 0;">F1 Pomoc</span>
<svg style="left:1165px;top:657px" width="16" height="16" viewBox="0 0 16 16"><circle cx="8" cy="8" r="8" fill="#0b72bb"/><rect x="6.8" y="6.6" width="2.4" height="6" fill="#fff"/><circle cx="8" cy="4.2" r="1.4" fill="#fff"/></svg>
<span class="t" style="top:657px;font-size:12px;line-height:14px;color:#000;left:1185.5px;transform:scaleX(0.8798);transform-origin:0 0;">eFAQ</span>
<svg style="left:0;top:50px" width="780" height="40" viewBox="0 50 780 40"><rect x="42.5" y="69" width="26.5" height="16" fill="#fff"/><path d="M42.5 69.500L55.500 56.500L68.500 69.500z" fill="#fff"/><path d="M42.500 69.500v15.500M69 69.500v15.500" stroke="#8b8b8b" stroke-width="1" fill="none"/><rect x="42" y="84.500" width="27.500" height="1.500" fill="#fbb03b"/><rect x="42" y="84" width="27.500" height="1" fill="#7b7b7b"/><path d="M40.700 69.600L55.500 54.800L70.300 69.600" fill="none" stroke="#7b7b7b" stroke-width="2.600" stroke-linejoin="miter"/><path d="M40.900 69.400L55.500 54.800L70.100 69.400" fill="none" stroke="#fbb03b" stroke-width="1.300" stroke-dasharray="1.200 .500"/><rect x="51.700" y="71.700" width="7.600" height="13.500" fill="#fbb03b" stroke="#7b7b7b" stroke-width="1"/><rect x="57" y="78" width=".800" height=".800" fill="#7b7b7b"/><rect x="53.500" y="63.500" width="4" height="4" fill="#74b9e7" stroke="#7b7b7b" stroke-width="1"/><path d="M122.0 75.6 C122.0 70.4 126.2 68.6 128.5 68.6 L134.3 68.6 C136.6 68.6 140.8 70.4 140.8 75.6 C136.1 76.5 126.7 76.5 122.0 75.6z" fill="#0b6cb5"/><path d="M127.4 68.2 L131.4 72.6 L135.4 68.2 L134.2 72.9 L131.4 71.0 L128.6 72.9z" fill="#fff"/><path d="M129.3 65.7 L133.5 65.7 L134.0 68.8 L131.4 71.1 L128.8 68.8z" fill="#f8a93b"/><ellipse cx="131.4" cy="62.7" rx="5.0" ry="1.5" fill="#fcc25c"/><ellipse cx="131.4" cy="62.0" rx="4.0" ry="5.3" fill="#fcc25c"/><path d="M127.1 62.6 C125.7 53.4 137.1 53.4 135.7 62.6 L134.8 59.6 C132.9 59.8 130.8 59.1 129.0 58.9 L128.0 60.5z" fill="#767676"/><path d="M136.5 75.8 C136.5 71.6 140.5 70.2 142.5 70.2 L148.3 70.2 C150.3 70.2 154.3 71.6 154.3 75.8 C149.8 76.7 141.0 76.7 136.5 75.8z" fill="#f4512c"/><path d="M141.4 69.8 L145.4 74.2 L149.4 69.8 L148.2 74.5 L145.4 72.6 L142.6 74.5z" fill="#fff"/><path d="M143.3 67.3 L147.5 67.3 L148.0 70.4 L145.4 72.7 L142.8 70.4z" fill="#f8a93b"/><path d="M140.9 62.7 C140.4 55.5 150.4 55.5 149.9 62.7 C150.2 65.9 153.3 66.0 152.4 68.8 C150.9 69.5 149.1 68.6 148.7 67.3 L142.1 67.3 C141.7 68.6 139.9 69.5 138.4 68.8 C137.5 66.0 140.6 65.9 140.9 62.7z" fill="#767676"/><ellipse cx="145.4" cy="64.3" rx="5.0" ry="1.5" fill="#fcc25c"/><ellipse cx="145.4" cy="63.6" rx="4.0" ry="5.3" fill="#fcc25c"/><path d="M141.1 63.8 C140.2 55.7 150.6 55.7 149.7 63.8 C149.3 61.4 147.6 59.7 146.5 59.6 C145.0 61.2 142.3 61.4 141.1 63.8z" fill="#767676"/><path d="M141.4 60.3 C142.8 56.6 148.0 56.6 149.4 60.3" fill="none" stroke="#f4512c" stroke-width="1.0"/><path d="M128.6 83.6 C128.6 78.1 132.9 76.2 135.3 76.2 L141.1 76.2 C143.5 76.2 147.8 78.1 147.8 83.6 C143.0 84.5 133.4 84.5 128.6 83.6z" fill="#12a67c"/><path d="M134.2 75.8 L138.2 80.2 L142.2 75.8 L141.0 80.5 L138.2 78.6 L135.4 80.5z" fill="#fff"/><path d="M136.1 73.3 L140.3 73.3 L140.8 76.4 L138.2 78.7 L135.6 76.4z" fill="#f8a93b"/><ellipse cx="138.2" cy="70.3" rx="5.0" ry="1.5" fill="#fcc25c"/><ellipse cx="138.2" cy="69.6" rx="4.0" ry="5.3" fill="#fcc25c"/><path d="M133.9 70.2 C132.5 61.0 143.9 61.0 142.5 70.2 L141.6 67.2 C139.7 67.4 137.6 66.7 135.8 66.5 L134.8 68.1z" fill="#767676"/><path d="M202.500 54.500h15l5 5v20h-20z" fill="#fff" stroke="#9a9a9a" stroke-width="1"/><path d="M217.500 54.500v5h5" fill="#f4f4f4" stroke="#9a9a9a" stroke-width="1"/><rect x="205" y="61" width="2" height="2" fill="#f7941d"/><rect x="209" y="61.6" width="10" height="1" fill="#a9a9a9"/><rect x="205" y="65" width="2" height="2" fill="#f7941d"/><rect x="209" y="65.6" width="10" height="1" fill="#a9a9a9"/><rect x="205" y="69" width="2" height="2" fill="#f7941d"/><rect x="209" y="69.6" width="10" height="1" fill="#a9a9a9"/><rect x="205" y="73" width="2" height="2" fill="#f7941d"/><rect x="209" y="73.6" width="10" height="1" fill="#a9a9a9"/><path d="M211.0 85.1 C211.0 79.4 216.2 77.5 219.3 77.5 L225.7 77.5 C228.8 77.5 234.0 79.4 234.0 85.1 C228.2 86.0 216.8 86.0 211.0 85.1z" fill="#0b6cb5"/><path d="M218.1 77.1 L222.5 81.8 L226.9 77.1 L225.5 82.1 L222.5 80.1 L219.5 82.1z" fill="#fff"/><path d="M220.2 74.3 L224.8 74.3 L225.3 77.7 L222.5 80.2 L219.7 77.7z" fill="#f8a93b"/><ellipse cx="222.5" cy="71.1" rx="5.4" ry="1.6" fill="#fcc25c"/><ellipse cx="222.5" cy="70.3" rx="4.4" ry="5.8" fill="#fcc25c"/><path d="M217.8 70.9 C216.3 60.9 228.7 60.9 227.2 70.9 L226.2 67.7 C224.1 67.9 221.9 67.1 219.9 66.9 L218.8 68.7z" fill="#767676"/><rect x="294.500" y="54.500" width="23" height="23" fill="#fff" stroke="#9a9a9a" stroke-width="1"/><rect x="298" y="64" width="4" height="11" fill="#0b6cb5"/><rect x="304" y="67" width="4" height="8" fill="#12a67c"/><rect x="310" y="58" width="4" height="17" fill="#f9a535"/><path d="M303.0 84.8 C303.0 79.1 308.2 77.2 311.3 77.2 L317.7 77.2 C320.8 77.2 326.0 79.1 326.0 84.8 C320.2 85.7 308.8 85.7 303.0 84.8z" fill="#7c7c7c"/><path d="M311.1 77.0 L317.9 77.0 L315.8 85.4 L313.2 85.4z" fill="#fff"/><path d="M313.9 80.2 L315.1 80.2 L315.0 85.4 L314.0 85.4z" fill="#f4512c"/><path d="M312.2 74.0 L316.8 74.0 L317.3 77.4 L314.5 79.9 L311.7 77.4z" fill="#f8a93b"/><ellipse cx="314.5" cy="70.8" rx="5.4" ry="1.6" fill="#fcc25c"/><ellipse cx="314.5" cy="70.0" rx="4.4" ry="5.8" fill="#fcc25c"/><path d="M309.8 70.6 C308.3 60.6 320.7 60.6 319.2 70.6 L318.2 67.4 C316.1 67.6 313.9 66.8 311.9 66.6 L310.8 68.4z" fill="#767676"/><path d="M385.0 77.7 C385.0 71.7 389.2 69.7 391.3 69.7 L397.5 69.7 C399.6 69.7 403.8 71.7 403.8 77.7 C399.1 78.6 389.7 78.6 385.0 77.7z" fill="#b041b0"/><path d="M390.1 69.3 L394.4 73.9 L398.7 69.3 L397.3 74.2 L394.4 72.2 L391.5 74.2z" fill="#fff"/><path d="M392.1 66.5 L396.7 66.5 L397.1 69.9 L394.4 72.3 L391.7 69.9z" fill="#f8a93b"/><path d="M389.6 61.6 C389.1 54.0 399.7 54.0 399.2 61.6 C399.5 65.0 402.8 65.1 401.8 68.1 C400.3 68.9 398.3 67.9 397.9 66.5 L390.9 66.5 C390.5 67.9 388.5 68.9 387.0 68.1 C386.0 65.1 389.3 65.0 389.6 61.6z" fill="#767676"/><ellipse cx="394.4" cy="63.4" rx="5.3" ry="1.6" fill="#fcc25c"/><ellipse cx="394.4" cy="62.6" rx="4.3" ry="5.7" fill="#fcc25c"/><path d="M389.8 62.8 C388.9 54.2 399.9 54.2 399.0 62.8 C398.5 60.2 396.8 58.5 395.6 58.3 C394.0 60.1 391.1 60.2 389.8 62.8z" fill="#767676"/><path d="M390.2 59.1 C391.7 55.2 397.1 55.2 398.6 59.1" fill="none" stroke="#b041b0" stroke-width="1.1"/><path d="M394.0 82.4 C394.0 77.0 399.2 75.2 402.3 75.2 L408.7 75.2 C411.8 75.2 417.0 77.0 417.0 82.4 C411.2 83.3 399.8 83.3 394.0 82.4z" fill="#7bbde0"/><path d="M401.1 74.8 L405.5 79.5 L409.9 74.8 L408.5 79.8 L405.5 77.8 L402.5 79.8z" fill="#fff"/><path d="M403.2 72.0 L407.8 72.0 L408.3 75.4 L405.5 77.9 L402.7 75.4z" fill="#f8a93b"/><ellipse cx="405.5" cy="68.8" rx="5.4" ry="1.6" fill="#fcc25c"/><ellipse cx="405.5" cy="68.0" rx="4.4" ry="5.8" fill="#fcc25c"/><path d="M400.8 68.6 C399.3 58.6 411.7 58.6 410.2 68.6 L409.2 65.4 C407.1 65.6 404.9 64.8 402.9 64.6 L401.8 66.4z" fill="#767676"/><path d="M389 75v11M384.500 80.500h11.500" stroke="#f0f0f0" stroke-width="5" fill="none"/><path d="M390.500 75v11M385 80.500h11" stroke="#10a67c" stroke-width="3.200" fill="none"/><circle cx="485.700" cy="69.800" r="13" fill="#f0f0f0" stroke="#1f72ba" stroke-width="2.600"/><path d="M478.800 63.500l6.700 7.500l6-6.500" fill="none" stroke="#1f72ba" stroke-width="1.300"/><path d="M470.0 83.1 C470.0 78.3 474.3 76.7 476.9 76.7 L482.3 76.7 C484.9 76.7 489.2 78.3 489.2 83.1 C484.4 84.0 474.8 84.0 470.0 83.1z" fill="#d95a36"/><path d="M475.9 76.3 L479.6 80.4 L483.3 76.3 L482.2 80.6 L479.6 78.9 L477.1 80.6z" fill="#fff"/><path d="M477.6 74.0 L481.6 74.0 L482.0 76.9 L479.6 79.0 L477.2 76.9z" fill="#f8a93b"/><ellipse cx="479.6" cy="71.3" rx="4.6" ry="1.4" fill="#fcc25c"/><ellipse cx="479.6" cy="70.6" rx="3.7" ry="4.9" fill="#fcc25c"/><path d="M475.6 71.1 C474.3 62.6 484.9 62.6 483.6 71.1 L482.7 68.4 C481.0 68.6 479.1 67.9 477.4 67.7 L476.5 69.2z" fill="#767676"/><path d="M708 54h17a4 4 0 0 1 4 4v9.500a4 4 0 0 1-4 4h-14.500l-5.700 4.700l2.500-5.200a4 4 0 0 1-3.300-3.500v-9.500a4 4 0 0 1 4-4z" fill="#0b72bb"/><path d="M711.500 62h22a2.500 2.500 0 0 1 2.500 2.500v14a2.500 2.500 0 0 1-2.500 2.500h-2.500v5l-4.800-5h-14.700a2.500 2.500 0 0 1-2.500-2.500v-14a2.500 2.500 0 0 1 2.500-2.500z" fill="#7fbcdf"/><circle cx="715.400" cy="71.600" r="2.500" fill="#fff"/><circle cx="722.500" cy="71.600" r="2.500" fill="#fff"/><circle cx="729.600" cy="71.600" r="2.500" fill="#fff"/><defs><linearGradient id="gor" x1="0" y1="0" x2="0" y2="1"><stop offset="0" stop-color="#f5a20f"/><stop offset="1" stop-color="#e61b1b"/></linearGradient><linearGradient id="gyg" x1="0" y1="0" x2="0" y2="1"><stop offset="0" stop-color="#ecd900"/><stop offset="1" stop-color="#5cb524"/></linearGradient><linearGradient id="gbl" x1="0" y1="0" x2="0" y2="1"><stop offset="0" stop-color="#29b6f0"/><stop offset="1" stop-color="#1565b4"/></linearGradient></defs><path d="M647 69.800h-7.500a1.500 1.500 0 0 0-1.500 1.500v8a1.500 1.500 0 0 0 1.500 1.500h6.500l1.500 2l.5-2h1.500a1.500 1.500 0 0 0 1.500-1.500v-3" fill="none" stroke="url(#gyg)" stroke-width="1.800" stroke-linecap="round"/><path d="M664 76v3a1.200 1.200 0 0 1-1.200 1.200h-4.500l-1.500 1.300l-1.200-1.300l-.900-1.200" fill="none" stroke="url(#gbl)" stroke-width="1.500" stroke-linecap="round"/><path d="M651.500 59.300h14.500a2 2 0 0 1 2 2v10a2 2 0 0 1-2 2h-10.500l-3.200 4l.7-4h-1.500a2 2 0 0 1-2-2v-10a2 2 0 0 1 2-2z" fill="#f0f0f0" stroke="url(#gor)" stroke-width="2.400" stroke-linejoin="round"/></svg>
<span class="t" style="top:48.3px;font-size:35.5px;line-height:40px;color:#0b72bb;font-weight:bold;left:554px;-webkit-text-stroke:1.3px #0b72bb;transform:scaleX(0.9906);transform-origin:0 0;">@</span>
<div style="left:1213px;top:752px;width:306px;height:99px;box-sizing:border-box;border:2px solid #7db9d9;border-radius:8px;background:#fff;"></div>
<svg style="left:1220px;top:760px" width="80" height="84" viewBox="1220 760 80 84"><defs><linearGradient id="l4a" x1="0" y1="0" x2="0" y2="1"><stop offset="0" stop-color="#f0471a"/><stop offset=".5" stop-color="#fb8c00"/><stop offset="1" stop-color="#ffd000"/></linearGradient><linearGradient id="l4d" x1="1" y1="0" x2="0" y2="1"><stop offset="0" stop-color="#f0471a"/><stop offset=".35" stop-color="#fb9a00"/><stop offset=".7" stop-color="#f3dc3c"/><stop offset="1" stop-color="#8cc63f"/></linearGradient><linearGradient id="l4h" x1="0" y1="0" x2="1" y2="0"><stop offset="0" stop-color="#8cc63f"/><stop offset=".3" stop-color="#3fb7b0"/><stop offset=".7" stop-color="#4aa7cf"/><stop offset="1" stop-color="#8aa9b9"/></linearGradient><linearGradient id="l4b" x1="0" y1="0" x2="0" y2="1"><stop offset="0" stop-color="#33a6dc"/><stop offset="1" stop-color="#0a5fb0"/></linearGradient><linearGradient id="arR" x1="0" y1="0" x2="0" y2="1"><stop offset="0" stop-color="#7fbbd9"/><stop offset=".55" stop-color="#a9d0e6"/><stop offset="1" stop-color="#eef5fa"/></linearGradient><linearGradient id="arL" x1="0" y1="1" x2="0" y2="0"><stop offset="0" stop-color="#7fbbd9"/><stop offset=".55" stop-color="#a9d0e6"/><stop offset="1" stop-color="#eef5fa"/></linearGradient></defs><path d="M1259.500 765.500A35.500 35.500 0 0 1 1275 831.500" fill="none" stroke="url(#arR)" stroke-width="3"/><path d="M1260 837.200A36 36 0 0 1 1243 769" fill="none" stroke="url(#arL)" stroke-width="3"/><path d="M1262 761.400l-6.500 4.100l6.500 4.100" fill="none" stroke="#7fbbd9" stroke-width="2.600"/><path d="M1257.500 833.100l6.500 4.100l-6.500 4.100" fill="none" stroke="#7fbbd9" stroke-width="2.600"/><path d="M1234 811L1262 776.500" fill="none" stroke="url(#l4d)" stroke-width="3"/><rect x="1261" y="776" width="3.600" height="24.300" fill="url(#l4a)"/><rect x="1233.500" y="809.900" width="50.500" height="2.900" fill="url(#l4h)"/><rect x="1261" y="812.800" width="3.600" height="11.600" fill="url(#l4b)"/></svg>
<span class="t" style="top:802.7px;font-size:6.4px;line-height:7px;color:#a6cb52;font-weight:bold;left:1244px;letter-spacing:0.578px;">INCLUSIVE</span>
<span class="t" style="top:757px;font-size:14px;line-height:16px;color:#2b8ad6;font-weight:bold;left:1303.4px;transform:scaleX(0.9451);transform-origin:0 0;">Licencja 4 Inclusive</span>
<svg style="left:1498px;top:757px" width="16" height="16" viewBox="0 0 16 16"><circle cx="8" cy="8" r="7.600" fill="#7fbcdb"/><path d="M4.300 8.200l2.600 2.700l4.800-5.400" fill="none" stroke="#fff" stroke-width="2"/></svg>
<div style="left:1351px;top:780px;width:116px;height:16px;background:#7fbcdb;border-radius:8px;"></div>
<span class="t" style="top:783px;font-size:9.5px;line-height:11px;color:#fff;font-weight:bold;left:1362.3px;transform:scaleX(0.9604);transform-origin:0 0;">SPRAWDŹ KORZYŚCI</span>
<div style="left:1303px;top:804px;width:212px;height:2px;background:#e9eef1;"></div>
<span class="t" style="top:813px;font-size:12px;line-height:14px;color:#9c9a98;font-weight:bold;left:1303.4px;transform:scaleX(0.9782);transform-origin:0 0;">Koniec działania Bezpłatnego Startu</span>
<span class="t" style="top:828.5px;font-size:13px;line-height:15px;color:#2b8ad6;font-weight:bold;left:1376.3px;transform:scaleX(0.9450);transform-origin:0 0;">09.05.2016</span>
<span class="t" style="left:1357px;top:-0.5px;font-family:'Liberation Serif',serif;font-size:28.5px;line-height:31px;font-weight:bold;color:rgba(214,216,220,.40);text-shadow:3px 2px 0 rgba(0,0,0,.18);letter-spacing:-0.289px;">programy.net<span style="color:rgba(120,175,235,.55)">.pl</span></span>
<span class="t" style="left:680.6px;top:431.5px;font-family:'Liberation Serif',serif;font-size:28.5px;line-height:31px;font-weight:bold;color:rgba(214,216,220,.40);text-shadow:3px 2px 0 rgba(0,0,0,.18);letter-spacing:-0.289px;">programy.net<span style="color:rgba(120,175,235,.55)">.pl</span></span>
<span class="t" style="left:4.2px;top:862.5px;font-family:'Liberation Serif',serif;font-size:28.5px;line-height:31px;font-weight:bold;color:rgba(214,216,220,.40);text-shadow:3px 2px 0 rgba(0,0,0,.18);letter-spacing:-0.289px;">programy.net<span style="color:rgba(120,175,235,.55)">.pl</span></span>
</body></html>
